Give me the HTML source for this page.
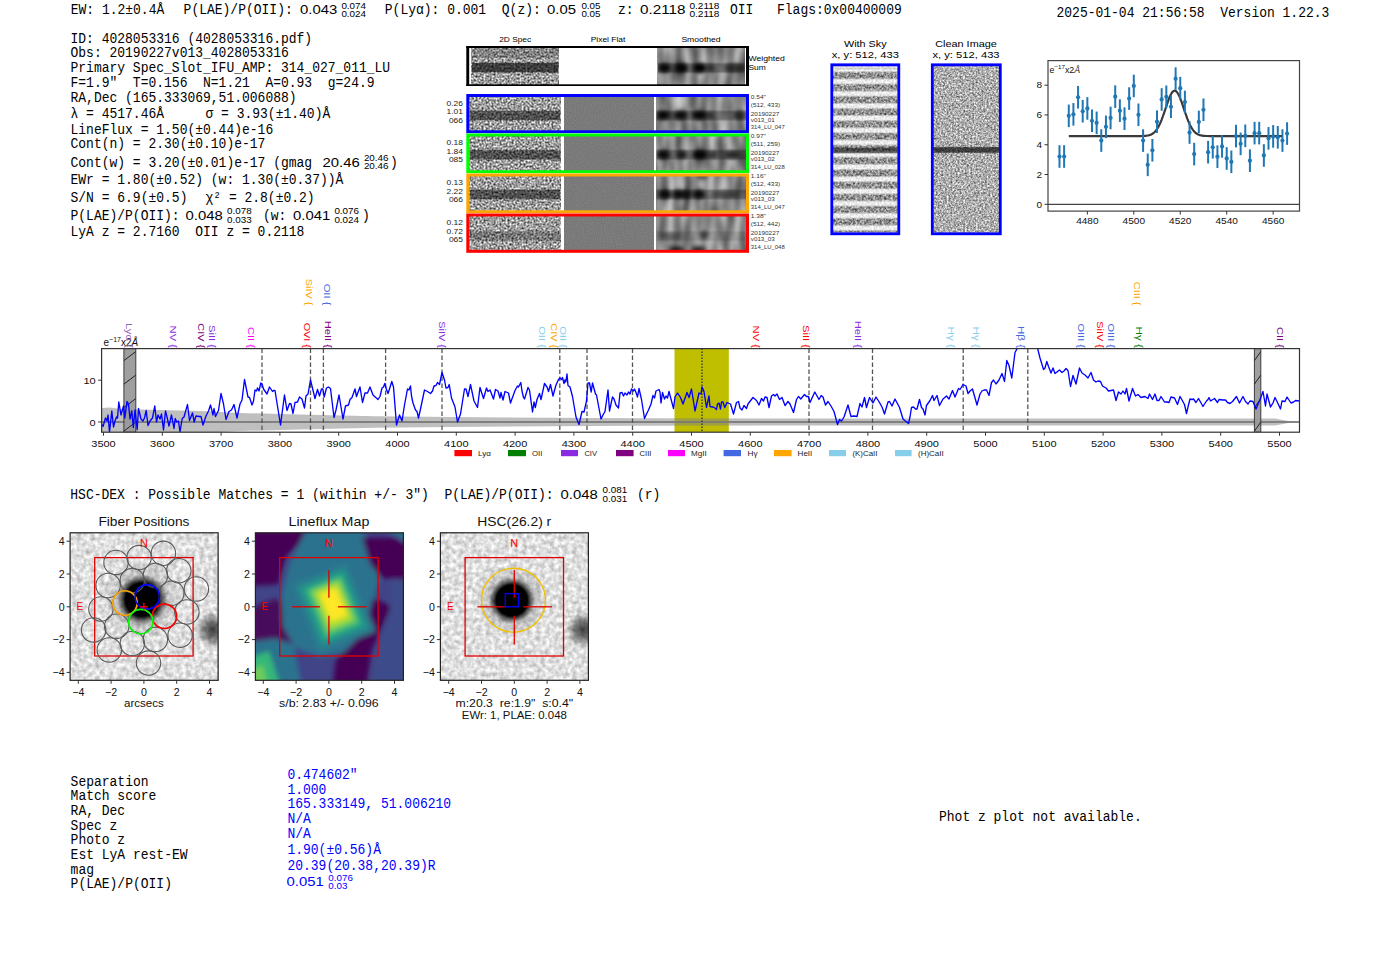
<!DOCTYPE html><html><head><meta charset="utf-8"><style>html,body{margin:0;padding:0;background:#fff;overflow:hidden}svg{display:block} text{white-space:pre}</style></head><body><svg width="1400" height="953" viewBox="0 0 1400 953" style="white-space:pre"><defs><filter id="blur2" x="-20%" y="-50%" width="140%" height="200%"><feGaussianBlur stdDeviation="2.2"/></filter><filter id="blur1" x="-20%" y="-50%" width="140%" height="200%"><feGaussianBlur stdDeviation="1.2"/></filter><filter id="nz1" x="471.90" y="47.80" width="86.60" height="36.60" filterUnits="userSpaceOnUse" color-interpolation-filters="sRGB"><feTurbulence type="fractalNoise" baseFrequency="0.5" numOctaves="2" seed="11"/><feColorMatrix type="matrix" values="1.35 0 0 0 -0.05500000000000005  1.35 0 0 0 -0.05500000000000005  1.35 0 0 0 -0.05500000000000005  0 0 0 0 1"/></filter><linearGradient id="g1" x1="0" y1="0" x2="0" y2="1"><stop offset="0.0055" stop-color="#000" stop-opacity="0.000"/><stop offset="0.0464" stop-color="#000" stop-opacity="0.180"/><stop offset="0.2650" stop-color="#000" stop-opacity="0.180"/><stop offset="0.3060" stop-color="#000" stop-opacity="0.000"/><stop offset="0.3934" stop-color="#000" stop-opacity="0.000"/><stop offset="0.4262" stop-color="#000" stop-opacity="0.620"/><stop offset="0.6557" stop-color="#000" stop-opacity="0.620"/><stop offset="0.6885" stop-color="#000" stop-opacity="0.000"/></linearGradient><filter id="nz2" x="657.90" y="47.80" width="86.70" height="36.30" filterUnits="userSpaceOnUse" color-interpolation-filters="sRGB"><feTurbulence type="fractalNoise" baseFrequency="0.12 0.035" numOctaves="1" seed="5"/><feColorMatrix type="matrix" values="0.8 0 0 0 0.14  0.8 0 0 0 0.14  0.8 0 0 0 0.14  0 0 0 0 1"/></filter><linearGradient id="g2" x1="0" y1="0" x2="0" y2="1"><stop offset="0.3884" stop-color="#000" stop-opacity="0.000"/><stop offset="0.4573" stop-color="#000" stop-opacity="0.320"/><stop offset="0.6501" stop-color="#000" stop-opacity="0.320"/><stop offset="0.7190" stop-color="#000" stop-opacity="0.000"/></linearGradient><clipPath id="cb0"><rect x="657.90" y="47.80" width="86.70" height="36.30"/></clipPath><filter id="nz3" x="469.80" y="95.50" width="90.40" height="36.30" filterUnits="userSpaceOnUse" color-interpolation-filters="sRGB"><feTurbulence type="fractalNoise" baseFrequency="0.5" numOctaves="2" seed="94"/><feColorMatrix type="matrix" values="1.35 0 0 0 -0.05500000000000005  1.35 0 0 0 -0.05500000000000005  1.35 0 0 0 -0.05500000000000005  0 0 0 0 1"/></filter><linearGradient id="g3" x1="0" y1="0" x2="0" y2="1"><stop offset="0.3994" stop-color="#000" stop-opacity="0.000"/><stop offset="0.4408" stop-color="#000" stop-opacity="0.500"/><stop offset="0.6612" stop-color="#000" stop-opacity="0.500"/><stop offset="0.7025" stop-color="#000" stop-opacity="0.000"/></linearGradient><filter id="nz4" x="564.00" y="95.50" width="89.50" height="36.30" filterUnits="userSpaceOnUse" color-interpolation-filters="sRGB"><feTurbulence type="fractalNoise" baseFrequency="0.9" numOctaves="1" seed="97"/><feColorMatrix type="matrix" values="0.12 0 0 0 0.42  0.12 0 0 0 0.42  0.12 0 0 0 0.42  0 0 0 0 1"/></filter><filter id="nz5" x="656.50" y="95.50" width="89.50" height="36.30" filterUnits="userSpaceOnUse" color-interpolation-filters="sRGB"><feTurbulence type="fractalNoise" baseFrequency="0.12 0.035" numOctaves="1" seed="101"/><feColorMatrix type="matrix" values="0.8 0 0 0 0.14  0.8 0 0 0 0.14  0.8 0 0 0 0.14  0 0 0 0 1"/></filter><linearGradient id="g4" x1="0" y1="0" x2="0" y2="1"><stop offset="0.3857" stop-color="#000" stop-opacity="0.000"/><stop offset="0.4545" stop-color="#000" stop-opacity="0.300"/><stop offset="0.6474" stop-color="#000" stop-opacity="0.300"/><stop offset="0.7163" stop-color="#000" stop-opacity="0.000"/></linearGradient><clipPath id="cb94"><rect x="656.50" y="95.50" width="89.50" height="36.30"/></clipPath><filter id="nz6" x="469.80" y="135.00" width="90.40" height="36.80" filterUnits="userSpaceOnUse" color-interpolation-filters="sRGB"><feTurbulence type="fractalNoise" baseFrequency="0.5" numOctaves="2" seed="133"/><feColorMatrix type="matrix" values="1.35 0 0 0 -0.05500000000000005  1.35 0 0 0 -0.05500000000000005  1.35 0 0 0 -0.05500000000000005  0 0 0 0 1"/></filter><linearGradient id="g5" x1="0" y1="0" x2="0" y2="1"><stop offset="0.3859" stop-color="#000" stop-opacity="0.000"/><stop offset="0.4266" stop-color="#000" stop-opacity="0.500"/><stop offset="0.6440" stop-color="#000" stop-opacity="0.500"/><stop offset="0.6848" stop-color="#000" stop-opacity="0.000"/></linearGradient><filter id="nz7" x="564.00" y="135.00" width="89.50" height="36.80" filterUnits="userSpaceOnUse" color-interpolation-filters="sRGB"><feTurbulence type="fractalNoise" baseFrequency="0.9" numOctaves="1" seed="136"/><feColorMatrix type="matrix" values="0.12 0 0 0 0.42  0.12 0 0 0 0.42  0.12 0 0 0 0.42  0 0 0 0 1"/></filter><filter id="nz8" x="656.50" y="135.00" width="89.50" height="36.80" filterUnits="userSpaceOnUse" color-interpolation-filters="sRGB"><feTurbulence type="fractalNoise" baseFrequency="0.12 0.035" numOctaves="1" seed="140"/><feColorMatrix type="matrix" values="0.8 0 0 0 0.14  0.8 0 0 0 0.14  0.8 0 0 0 0.14  0 0 0 0 1"/></filter><linearGradient id="g6" x1="0" y1="0" x2="0" y2="1"><stop offset="0.3723" stop-color="#000" stop-opacity="0.000"/><stop offset="0.4402" stop-color="#000" stop-opacity="0.300"/><stop offset="0.6304" stop-color="#000" stop-opacity="0.300"/><stop offset="0.6984" stop-color="#000" stop-opacity="0.000"/></linearGradient><clipPath id="cb133"><rect x="656.50" y="135.00" width="89.50" height="36.80"/></clipPath><filter id="nz9" x="469.80" y="175.00" width="90.40" height="36.80" filterUnits="userSpaceOnUse" color-interpolation-filters="sRGB"><feTurbulence type="fractalNoise" baseFrequency="0.5" numOctaves="2" seed="173"/><feColorMatrix type="matrix" values="1.35 0 0 0 -0.05500000000000005  1.35 0 0 0 -0.05500000000000005  1.35 0 0 0 -0.05500000000000005  0 0 0 0 1"/></filter><linearGradient id="g7" x1="0" y1="0" x2="0" y2="1"><stop offset="0.3777" stop-color="#000" stop-opacity="0.000"/><stop offset="0.4185" stop-color="#000" stop-opacity="0.500"/><stop offset="0.6359" stop-color="#000" stop-opacity="0.500"/><stop offset="0.6766" stop-color="#000" stop-opacity="0.000"/></linearGradient><filter id="nz10" x="564.00" y="175.00" width="89.50" height="36.80" filterUnits="userSpaceOnUse" color-interpolation-filters="sRGB"><feTurbulence type="fractalNoise" baseFrequency="0.9" numOctaves="1" seed="176"/><feColorMatrix type="matrix" values="0.12 0 0 0 0.42  0.12 0 0 0 0.42  0.12 0 0 0 0.42  0 0 0 0 1"/></filter><filter id="nz11" x="656.50" y="175.00" width="89.50" height="36.80" filterUnits="userSpaceOnUse" color-interpolation-filters="sRGB"><feTurbulence type="fractalNoise" baseFrequency="0.12 0.035" numOctaves="1" seed="180"/><feColorMatrix type="matrix" values="0.8 0 0 0 0.14  0.8 0 0 0 0.14  0.8 0 0 0 0.14  0 0 0 0 1"/></filter><linearGradient id="g8" x1="0" y1="0" x2="0" y2="1"><stop offset="0.3641" stop-color="#000" stop-opacity="0.000"/><stop offset="0.4321" stop-color="#000" stop-opacity="0.300"/><stop offset="0.6223" stop-color="#000" stop-opacity="0.300"/><stop offset="0.6902" stop-color="#000" stop-opacity="0.000"/></linearGradient><clipPath id="cb173"><rect x="656.50" y="175.00" width="89.50" height="36.80"/></clipPath><filter id="nz12" x="469.80" y="215.00" width="90.40" height="36.30" filterUnits="userSpaceOnUse" color-interpolation-filters="sRGB"><feTurbulence type="fractalNoise" baseFrequency="0.5" numOctaves="2" seed="213"/><feColorMatrix type="matrix" values="1.35 0 0 0 -0.05500000000000005  1.35 0 0 0 -0.05500000000000005  1.35 0 0 0 -0.05500000000000005  0 0 0 0 1"/></filter><linearGradient id="g9" x1="0" y1="0" x2="0" y2="1"><stop offset="0.4270" stop-color="#000" stop-opacity="0.000"/><stop offset="0.4683" stop-color="#000" stop-opacity="0.250"/><stop offset="0.6887" stop-color="#000" stop-opacity="0.250"/><stop offset="0.7300" stop-color="#000" stop-opacity="0.000"/></linearGradient><filter id="nz13" x="564.00" y="215.00" width="89.50" height="36.30" filterUnits="userSpaceOnUse" color-interpolation-filters="sRGB"><feTurbulence type="fractalNoise" baseFrequency="0.9" numOctaves="1" seed="216"/><feColorMatrix type="matrix" values="0.12 0 0 0 0.42  0.12 0 0 0 0.42  0.12 0 0 0 0.42  0 0 0 0 1"/></filter><filter id="nz14" x="656.50" y="215.00" width="89.50" height="36.30" filterUnits="userSpaceOnUse" color-interpolation-filters="sRGB"><feTurbulence type="fractalNoise" baseFrequency="0.12 0.035" numOctaves="1" seed="220"/><feColorMatrix type="matrix" values="0.8 0 0 0 0.14  0.8 0 0 0 0.14  0.8 0 0 0 0.14  0 0 0 0 1"/></filter><linearGradient id="g10" x1="0" y1="0" x2="0" y2="1"><stop offset="0.4132" stop-color="#000" stop-opacity="0.000"/><stop offset="0.4821" stop-color="#000" stop-opacity="0.120"/><stop offset="0.6749" stop-color="#000" stop-opacity="0.120"/><stop offset="0.7438" stop-color="#000" stop-opacity="0.000"/></linearGradient><clipPath id="cb213"><rect x="656.50" y="215.00" width="89.50" height="36.30"/></clipPath><filter id="nz15" x="833.00" y="66.20" width="64.70" height="166.30" filterUnits="userSpaceOnUse" color-interpolation-filters="sRGB"><feTurbulence type="fractalNoise" baseFrequency="0.5" numOctaves="1" seed="22"/><feColorMatrix type="matrix" values="0.35 0 0 0 0.7550000000000001  0.35 0 0 0 0.7550000000000001  0.35 0 0 0 0.7550000000000001  0 0 0 0 1"/></filter><clipPath id="skyclip"><rect x="833" y="66.2" width="64.70000000000005" height="166.3"/></clipPath><linearGradient id="g11" x1="0" y1="0" x2="0" y2="1"><stop offset="0.0048" stop-color="#fff" stop-opacity="0.350"/><stop offset="0.0096" stop-color="#fff" stop-opacity="0.000"/><stop offset="0.0144" stop-color="#fff" stop-opacity="0.350"/><stop offset="0.0235" stop-color="#fff" stop-opacity="0.000"/><stop offset="0.0277" stop-color="#fff" stop-opacity="0.000"/><stop offset="0.0409" stop-color="#fff" stop-opacity="1.000"/><stop offset="0.0698" stop-color="#fff" stop-opacity="1.000"/><stop offset="0.0830" stop-color="#fff" stop-opacity="0.000"/><stop offset="0.1010" stop-color="#fff" stop-opacity="0.000"/><stop offset="0.1143" stop-color="#fff" stop-opacity="1.000"/><stop offset="0.1431" stop-color="#fff" stop-opacity="1.000"/><stop offset="0.1563" stop-color="#fff" stop-opacity="0.000"/><stop offset="0.1744" stop-color="#fff" stop-opacity="0.000"/><stop offset="0.1876" stop-color="#fff" stop-opacity="1.000"/><stop offset="0.2165" stop-color="#fff" stop-opacity="1.000"/><stop offset="0.2297" stop-color="#fff" stop-opacity="0.000"/><stop offset="0.2477" stop-color="#fff" stop-opacity="0.000"/><stop offset="0.2610" stop-color="#fff" stop-opacity="1.000"/><stop offset="0.2898" stop-color="#fff" stop-opacity="1.000"/><stop offset="0.3031" stop-color="#fff" stop-opacity="0.000"/><stop offset="0.3211" stop-color="#fff" stop-opacity="0.000"/><stop offset="0.3343" stop-color="#fff" stop-opacity="1.000"/><stop offset="0.3632" stop-color="#fff" stop-opacity="1.000"/><stop offset="0.3764" stop-color="#fff" stop-opacity="0.000"/><stop offset="0.3945" stop-color="#fff" stop-opacity="0.000"/><stop offset="0.4077" stop-color="#fff" stop-opacity="1.000"/><stop offset="0.4366" stop-color="#fff" stop-opacity="1.000"/><stop offset="0.4498" stop-color="#fff" stop-opacity="0.000"/><stop offset="0.4678" stop-color="#fff" stop-opacity="0.000"/><stop offset="0.4811" stop-color="#fff" stop-opacity="1.000"/><stop offset="0.5099" stop-color="#fff" stop-opacity="1.000"/><stop offset="0.5232" stop-color="#fff" stop-opacity="0.000"/><stop offset="0.5412" stop-color="#fff" stop-opacity="0.000"/><stop offset="0.5544" stop-color="#fff" stop-opacity="1.000"/><stop offset="0.5833" stop-color="#fff" stop-opacity="1.000"/><stop offset="0.5965" stop-color="#fff" stop-opacity="0.000"/><stop offset="0.6146" stop-color="#fff" stop-opacity="0.000"/><stop offset="0.6278" stop-color="#fff" stop-opacity="1.000"/><stop offset="0.6566" stop-color="#fff" stop-opacity="1.000"/><stop offset="0.6699" stop-color="#fff" stop-opacity="0.000"/><stop offset="0.6879" stop-color="#fff" stop-opacity="0.000"/><stop offset="0.7011" stop-color="#fff" stop-opacity="1.000"/><stop offset="0.7300" stop-color="#fff" stop-opacity="1.000"/><stop offset="0.7432" stop-color="#fff" stop-opacity="0.000"/><stop offset="0.7613" stop-color="#fff" stop-opacity="0.000"/><stop offset="0.7745" stop-color="#fff" stop-opacity="1.000"/><stop offset="0.8034" stop-color="#fff" stop-opacity="1.000"/><stop offset="0.8166" stop-color="#fff" stop-opacity="0.000"/><stop offset="0.8346" stop-color="#fff" stop-opacity="0.000"/><stop offset="0.8479" stop-color="#fff" stop-opacity="1.000"/><stop offset="0.8767" stop-color="#fff" stop-opacity="1.000"/><stop offset="0.8900" stop-color="#fff" stop-opacity="0.000"/><stop offset="0.9080" stop-color="#fff" stop-opacity="0.000"/><stop offset="0.9212" stop-color="#fff" stop-opacity="1.000"/><stop offset="0.9501" stop-color="#fff" stop-opacity="1.000"/><stop offset="0.9633" stop-color="#fff" stop-opacity="0.000"/><stop offset="0.9814" stop-color="#fff" stop-opacity="0.000"/><stop offset="0.9946" stop-color="#fff" stop-opacity="1.000"/></linearGradient><mask id="skymask" maskUnits="userSpaceOnUse" x="833" y="66.2" width="64.70000000000005" height="166.3"><rect x="833" y="66.2" width="64.70000000000005" height="166.3" fill="url(#g11)"/></mask><filter id="nz16" x="833.00" y="66.20" width="64.70" height="166.30" filterUnits="userSpaceOnUse" color-interpolation-filters="sRGB"><feTurbulence type="fractalNoise" baseFrequency="0.45" numOctaves="2" seed="21"/><feColorMatrix type="matrix" values="1.0 0 0 0 0.06000000000000005  1.0 0 0 0 0.06000000000000005  1.0 0 0 0 0.06000000000000005  0 0 0 0 1"/></filter><linearGradient id="g12" x1="0" y1="0" x2="0" y2="1"><stop offset="0.4853" stop-color="#000" stop-opacity="0.000"/><stop offset="0.4925" stop-color="#000" stop-opacity="0.500"/><stop offset="0.5201" stop-color="#000" stop-opacity="0.500"/><stop offset="0.5274" stop-color="#000" stop-opacity="0.000"/></linearGradient><filter id="nz17" x="933.50" y="66.20" width="65.70" height="166.30" filterUnits="userSpaceOnUse" color-interpolation-filters="sRGB"><feTurbulence type="fractalNoise" baseFrequency="0.55" numOctaves="2" seed="31"/><feColorMatrix type="matrix" values="1.05 0 0 0 0.15500000000000003  1.05 0 0 0 0.15500000000000003  1.05 0 0 0 0.15500000000000003  0 0 0 0 1"/></filter><linearGradient id="g13" x1="0" y1="0" x2="0" y2="1"><stop offset="0.4823" stop-color="#000" stop-opacity="0.000"/><stop offset="0.4901" stop-color="#000" stop-opacity="0.650"/><stop offset="0.5165" stop-color="#000" stop-opacity="0.650"/><stop offset="0.5244" stop-color="#000" stop-opacity="0.000"/></linearGradient><clipPath id="specclip"><rect x="101.6" y="348.6" width="1197.9" height="83.59999999999997"/></clipPath><clipPath id="gc41"><rect x="70.1" y="532.8" width="148.0" height="147.5"/></clipPath><filter id="nz18" x="70.10" y="532.80" width="148.00" height="147.50" filterUnits="userSpaceOnUse" color-interpolation-filters="sRGB"><feTurbulence type="fractalNoise" baseFrequency="0.22" numOctaves="2" seed="41"/><feColorMatrix type="matrix" values="0.45 0 0 0 0.65  0.45 0 0 0 0.65  0.45 0 0 0 0.65  0 0 0 0 1"/></filter><radialGradient id="rg41"><stop offset="0" stop-color="#000" stop-opacity="1"/><stop offset="0.412" stop-color="#000" stop-opacity="1"/><stop offset="0.508" stop-color="#000" stop-opacity="0.6"/><stop offset="0.625" stop-color="#000" stop-opacity="0.15"/><stop offset="1" stop-color="#000" stop-opacity="0"/></radialGradient><radialGradient id="rg41b"><stop offset="0" stop-color="#000" stop-opacity="0.72"/><stop offset="0.45" stop-color="#000" stop-opacity="0.5"/><stop offset="1" stop-color="#000" stop-opacity="0"/></radialGradient><clipPath id="lfclip"><rect x="255.4" y="532.8" width="147.99999999999997" height="147.5"/></clipPath><filter id="lfblur" x="-10%" y="-10%" width="120%" height="120%"><feGaussianBlur stdDeviation="2.6"/></filter><clipPath id="gc43"><rect x="440.4" y="532.8" width="148.0" height="147.5"/></clipPath><filter id="nz19" x="440.40" y="532.80" width="148.00" height="147.50" filterUnits="userSpaceOnUse" color-interpolation-filters="sRGB"><feTurbulence type="fractalNoise" baseFrequency="0.22" numOctaves="2" seed="43"/><feColorMatrix type="matrix" values="0.45 0 0 0 0.65  0.45 0 0 0 0.65  0.45 0 0 0 0.65  0 0 0 0 1"/></filter><radialGradient id="rg43"><stop offset="0" stop-color="#000" stop-opacity="1"/><stop offset="0.421" stop-color="#000" stop-opacity="1"/><stop offset="0.513" stop-color="#000" stop-opacity="0.6"/><stop offset="0.625" stop-color="#000" stop-opacity="0.15"/><stop offset="1" stop-color="#000" stop-opacity="0"/></radialGradient><radialGradient id="rg43b"><stop offset="0" stop-color="#000" stop-opacity="0.72"/><stop offset="0.45" stop-color="#000" stop-opacity="0.5"/><stop offset="1" stop-color="#000" stop-opacity="0"/></radialGradient></defs><rect x="0" y="0" width="1400" height="953" fill="#fff"/><text xml:space="preserve" x="0" y="0" transform="translate(70.70,14.30) scale(1,1.07)" font-family="Liberation Mono, monospace" font-size="13" fill="#000" >EW: 1.2±0.4Å</text>
<text xml:space="preserve" x="0" y="0" transform="translate(183.60,14.30) scale(1,1.07)" font-family="Liberation Mono, monospace" font-size="13" fill="#000" >P(LAE)/P(OII):</text>
<text xml:space="preserve" x="0" y="0" transform="translate(300.00,14.30)" font-family="Liberation Sans, sans-serif" font-size="13" fill="#000" text-anchor="start" textLength="37.19" lengthAdjust="spacingAndGlyphs" >0.043</text>
<text xml:space="preserve" x="0" y="0" transform="translate(341.40,8.60)" font-family="Liberation Sans, sans-serif" font-size="8.6" fill="#000" text-anchor="start" textLength="24.61" lengthAdjust="spacingAndGlyphs" >0.074</text>
<text xml:space="preserve" x="0" y="0" transform="translate(341.40,17.20)" font-family="Liberation Sans, sans-serif" font-size="8.6" fill="#000" text-anchor="start" textLength="24.61" lengthAdjust="spacingAndGlyphs" >0.024</text>
<text xml:space="preserve" x="0" y="0" transform="translate(384.80,14.30) scale(1,1.07)" font-family="Liberation Mono, monospace" font-size="13" fill="#000" >P(Lyα): 0.001</text>
<text xml:space="preserve" x="0" y="0" transform="translate(501.80,14.30) scale(1,1.07)" font-family="Liberation Mono, monospace" font-size="13" fill="#000" >Q(z):</text>
<text xml:space="preserve" x="0" y="0" transform="translate(547.10,14.30)" font-family="Liberation Sans, sans-serif" font-size="13" fill="#000" text-anchor="start" textLength="28.92" lengthAdjust="spacingAndGlyphs" >0.05</text>
<text xml:space="preserve" x="0" y="0" transform="translate(581.40,8.60)" font-family="Liberation Sans, sans-serif" font-size="8.6" fill="#000" text-anchor="start" textLength="19.14" lengthAdjust="spacingAndGlyphs" >0.05</text>
<text xml:space="preserve" x="0" y="0" transform="translate(581.40,17.20)" font-family="Liberation Sans, sans-serif" font-size="8.6" fill="#000" text-anchor="start" textLength="19.14" lengthAdjust="spacingAndGlyphs" >0.05</text>
<text xml:space="preserve" x="0" y="0" transform="translate(618.00,14.30) scale(1,1.07)" font-family="Liberation Mono, monospace" font-size="13" fill="#000" >z:</text>
<text xml:space="preserve" x="0" y="0" transform="translate(640.10,14.30)" font-family="Liberation Sans, sans-serif" font-size="13" fill="#000" text-anchor="start" textLength="45.45" lengthAdjust="spacingAndGlyphs" >0.2118</text>
<text xml:space="preserve" x="0" y="0" transform="translate(689.40,8.60)" font-family="Liberation Sans, sans-serif" font-size="8.6" fill="#000" text-anchor="start" textLength="30.08" lengthAdjust="spacingAndGlyphs" >0.2118</text>
<text xml:space="preserve" x="0" y="0" transform="translate(689.40,17.20)" font-family="Liberation Sans, sans-serif" font-size="8.6" fill="#000" text-anchor="start" textLength="30.08" lengthAdjust="spacingAndGlyphs" >0.2118</text>
<text xml:space="preserve" x="0" y="0" transform="translate(730.00,14.30) scale(1,1.07)" font-family="Liberation Mono, monospace" font-size="13" fill="#000" >OII</text>
<text xml:space="preserve" x="0" y="0" transform="translate(777.00,14.30) scale(1,1.07)" font-family="Liberation Mono, monospace" font-size="13" fill="#000" >Flags:0x00400009</text>
<text xml:space="preserve" x="0" y="0" transform="translate(1056.50,16.70) scale(1,1.07)" font-family="Liberation Mono, monospace" font-size="13" fill="#000" >2025-01-04 21:56:58  Version 1.22.3</text>
<text xml:space="preserve" x="0" y="0" transform="translate(70.50,42.60) scale(1,1.07)" font-family="Liberation Mono, monospace" font-size="13" fill="#000" >ID: 4028053316 (4028053316.pdf)</text>
<text xml:space="preserve" x="0" y="0" transform="translate(70.50,56.80) scale(1,1.07)" font-family="Liberation Mono, monospace" font-size="13" fill="#000" >Obs: 20190227v013_4028053316</text>
<text xml:space="preserve" x="0" y="0" transform="translate(70.50,71.80) scale(1,1.07)" font-family="Liberation Mono, monospace" font-size="13" fill="#000" >Primary Spec_Slot_IFU_AMP: 314_027_011_LU</text>
<text xml:space="preserve" x="0" y="0" transform="translate(70.50,86.80) scale(1,1.07)" font-family="Liberation Mono, monospace" font-size="13" fill="#000" >F=1.9&quot;  T=0.156  N=1.21  A=0.93  g=24.9</text>
<text xml:space="preserve" x="0" y="0" transform="translate(70.50,101.80) scale(1,1.07)" font-family="Liberation Mono, monospace" font-size="13" fill="#000" >RA,Dec (165.333069,51.006088)</text>
<text xml:space="preserve" x="0" y="0" transform="translate(70.50,118.00) scale(1,1.07)" font-family="Liberation Mono, monospace" font-size="13" fill="#000" >λ = 4517.46Å</text>
<text xml:space="preserve" x="0" y="0" transform="translate(205.50,118.00) scale(1,1.07)" font-family="Liberation Mono, monospace" font-size="13" fill="#000" >σ = 3.93(±1.40)Å</text>
<text xml:space="preserve" x="0" y="0" transform="translate(70.50,133.50) scale(1,1.07)" font-family="Liberation Mono, monospace" font-size="13" fill="#000" >LineFlux = 1.50(±0.44)e-16</text>
<text xml:space="preserve" x="0" y="0" transform="translate(70.50,148.20) scale(1,1.07)" font-family="Liberation Mono, monospace" font-size="13" fill="#000" >Cont(n) = 2.30(±0.10)e-17</text>
<text xml:space="preserve" x="0" y="0" transform="translate(70.50,166.60) scale(1,1.07)" font-family="Liberation Mono, monospace" font-size="13" fill="#000" >Cont(w) = 3.20(±0.01)e-17 (gmag</text>
<text xml:space="preserve" x="0" y="0" transform="translate(322.50,166.50)" font-family="Liberation Sans, sans-serif" font-size="13" fill="#000" text-anchor="start" textLength="37.19" lengthAdjust="spacingAndGlyphs" >20.46</text>
<text xml:space="preserve" x="0" y="0" transform="translate(363.90,160.80)" font-family="Liberation Sans, sans-serif" font-size="8.6" fill="#000" text-anchor="start" textLength="24.61" lengthAdjust="spacingAndGlyphs" >20.46</text>
<text xml:space="preserve" x="0" y="0" transform="translate(363.90,169.40)" font-family="Liberation Sans, sans-serif" font-size="8.6" fill="#000" text-anchor="start" textLength="24.61" lengthAdjust="spacingAndGlyphs" >20.46</text>
<text xml:space="preserve" x="0" y="0" transform="translate(390.00,166.60) scale(1,1.07)" font-family="Liberation Mono, monospace" font-size="13" fill="#000" >)</text>
<text xml:space="preserve" x="0" y="0" transform="translate(70.50,184.30) scale(1,1.07)" font-family="Liberation Mono, monospace" font-size="13" fill="#000" >EWr = 1.80(±0.52) (w: 1.30(±0.37))Å</text>
<text xml:space="preserve" x="0" y="0" transform="translate(70.50,202.00) scale(1,1.07)" font-family="Liberation Mono, monospace" font-size="13" fill="#000" >S/N = 6.9(±0.5)</text>
<text xml:space="preserve" x="0" y="0" transform="translate(205.50,202.00) scale(1,1.07)" font-family="Liberation Mono, monospace" font-size="13" fill="#000" >χ² = 2.8(±0.2)</text>
<text xml:space="preserve" x="0" y="0" transform="translate(70.50,220.10) scale(1,1.07)" font-family="Liberation Mono, monospace" font-size="13" fill="#000" >P(LAE)/P(OII):</text>
<text xml:space="preserve" x="0" y="0" transform="translate(185.50,219.80)" font-family="Liberation Sans, sans-serif" font-size="13" fill="#000" text-anchor="start" textLength="37.19" lengthAdjust="spacingAndGlyphs" >0.048</text>
<text xml:space="preserve" x="0" y="0" transform="translate(227.00,214.10)" font-family="Liberation Sans, sans-serif" font-size="8.6" fill="#000" text-anchor="start" textLength="24.61" lengthAdjust="spacingAndGlyphs" >0.078</text>
<text xml:space="preserve" x="0" y="0" transform="translate(227.00,222.70)" font-family="Liberation Sans, sans-serif" font-size="8.6" fill="#000" text-anchor="start" textLength="24.61" lengthAdjust="spacingAndGlyphs" >0.033</text>
<text xml:space="preserve" x="0" y="0" transform="translate(263.00,220.10) scale(1,1.07)" font-family="Liberation Mono, monospace" font-size="13" fill="#000" >(w:</text>
<text xml:space="preserve" x="0" y="0" transform="translate(293.00,219.80)" font-family="Liberation Sans, sans-serif" font-size="13" fill="#000" text-anchor="start" textLength="37.19" lengthAdjust="spacingAndGlyphs" >0.041</text>
<text xml:space="preserve" x="0" y="0" transform="translate(334.40,214.10)" font-family="Liberation Sans, sans-serif" font-size="8.6" fill="#000" text-anchor="start" textLength="24.61" lengthAdjust="spacingAndGlyphs" >0.076</text>
<text xml:space="preserve" x="0" y="0" transform="translate(334.40,222.70)" font-family="Liberation Sans, sans-serif" font-size="8.6" fill="#000" text-anchor="start" textLength="24.61" lengthAdjust="spacingAndGlyphs" >0.024</text>
<text xml:space="preserve" x="0" y="0" transform="translate(362.00,220.10) scale(1,1.07)" font-family="Liberation Mono, monospace" font-size="13" fill="#000" >)</text>
<text xml:space="preserve" x="0" y="0" transform="translate(70.50,236.10) scale(1,1.07)" font-family="Liberation Mono, monospace" font-size="13" fill="#000" >LyA z = 2.7160  OII z = 0.2118</text>
<text xml:space="preserve" x="0" y="0" transform="translate(515.20,41.80)" font-family="Liberation Sans, sans-serif" font-size="7.7" fill="#000" text-anchor="middle" textLength="31.97" lengthAdjust="spacingAndGlyphs" >2D Spec</text>
<text xml:space="preserve" x="0" y="0" transform="translate(608.00,41.80)" font-family="Liberation Sans, sans-serif" font-size="7.7" fill="#000" text-anchor="middle" textLength="34.52" lengthAdjust="spacingAndGlyphs" >Pixel Flat</text>
<text xml:space="preserve" x="0" y="0" transform="translate(701.00,41.80)" font-family="Liberation Sans, sans-serif" font-size="7.7" fill="#000" text-anchor="middle" textLength="39.27" lengthAdjust="spacingAndGlyphs" >Smoothed</text>
<rect x="466.30" y="46.00" width="282.70" height="40.00" fill="#fff" />
<rect x="471.90" y="47.80" width="86.60" height="36.60" fill="#888" filter="url(#nz1)" opacity="1.0" />
<rect x="471.90" y="47.80" width="86.60" height="36.60" fill="url(#g1)"/>
<rect x="657.90" y="47.80" width="86.70" height="36.30" fill="#888" filter="url(#nz2)" opacity="1.0" />
<rect x="657.90" y="47.80" width="86.70" height="36.30" fill="url(#g2)"/>
<g clip-path="url(#cb0)"><g filter="url(#blur2)"><ellipse cx="664.3" cy="67.9" rx="6.5" ry="4.6" fill="#000" opacity="0.95"/><ellipse cx="681.5" cy="67.9" rx="6.8" ry="4.6" fill="#000" opacity="0.95"/><ellipse cx="699.7" cy="67.9" rx="6.8" ry="5.0" fill="#000" opacity="1"/><ellipse cx="711.0" cy="67.9" rx="3.3" ry="3.8" fill="#000" opacity="0.6"/><ellipse cx="734.0" cy="67.9" rx="10.3" ry="4.3" fill="#000" opacity="0.55"/></g></g>
<rect x="466.30" y="46.00" width="2.90" height="40.00" fill="#000" />
<rect x="746.00" y="46.00" width="3.00" height="40.00" fill="#000" />
<rect x="466.30" y="46.00" width="282.70" height="2.00" fill="#000" />
<rect x="466.30" y="84.30" width="282.70" height="1.70" fill="#000" />
<text xml:space="preserve" x="0" y="0" transform="translate(748.50,61.20)" font-family="Liberation Sans, sans-serif" font-size="7.7" fill="#000" text-anchor="start" textLength="36.39" lengthAdjust="spacingAndGlyphs" >Weighted</text>
<text xml:space="preserve" x="0" y="0" transform="translate(748.50,69.80)" font-family="Liberation Sans, sans-serif" font-size="7.7" fill="#000" text-anchor="start" textLength="17.23" lengthAdjust="spacingAndGlyphs" >Sum</text>
<rect x="466.30" y="94.00" width="282.70" height="39.30" fill="#fff" />
<rect x="469.80" y="95.50" width="90.40" height="36.30" fill="#888" filter="url(#nz3)" opacity="1.0" />
<rect x="469.80" y="95.50" width="90.40" height="36.30" fill="url(#g3)"/>
<rect x="564.00" y="95.50" width="89.50" height="36.30" fill="#7b7b7b" />
<rect x="564.00" y="95.50" width="89.50" height="36.30" fill="#888" filter="url(#nz4)" opacity="1.0" />
<rect x="656.50" y="95.50" width="89.50" height="36.30" fill="#888" filter="url(#nz5)" opacity="1.0" />
<rect x="656.50" y="95.50" width="89.50" height="36.30" fill="url(#g4)"/>
<g clip-path="url(#cb94)"><g filter="url(#blur2)"><ellipse cx="663.4" cy="115.2" rx="6.8" ry="4.8" fill="#000" opacity="0.95"/><ellipse cx="680.6" cy="115.2" rx="6.8" ry="4.8" fill="#000" opacity="0.9"/><ellipse cx="699.2" cy="115.2" rx="7.3" ry="4.8" fill="#000" opacity="0.95"/><ellipse cx="710.2" cy="115.2" rx="3.3" ry="3.8" fill="#000" opacity="0.6"/><ellipse cx="739.8" cy="115.2" rx="6.3" ry="4.8" fill="#000" opacity="0.6"/></g></g>
<rect x="467.80" y="95.50" width="279.70" height="36.30" fill="none" stroke="#0000ff" stroke-width="3" />
<text xml:space="preserve" x="0" y="0" transform="translate(463.00,105.60)" font-family="Liberation Sans, sans-serif" font-size="7.4" fill="#222" text-anchor="end" textLength="16.45" lengthAdjust="spacingAndGlyphs" >0.26</text>
<text xml:space="preserve" x="0" y="0" transform="translate(463.00,114.20)" font-family="Liberation Sans, sans-serif" font-size="7.4" fill="#222" text-anchor="end" textLength="16.45" lengthAdjust="spacingAndGlyphs" >1.01</text>
<text xml:space="preserve" x="0" y="0" transform="translate(463.00,122.80)" font-family="Liberation Sans, sans-serif" font-size="7.4" fill="#222" text-anchor="end" textLength="14.11" lengthAdjust="spacingAndGlyphs" >066</text>
<text xml:space="preserve" x="0" y="0" transform="translate(750.80,98.80)" font-family="Liberation Sans, sans-serif" font-size="5.6" fill="#333" text-anchor="start" textLength="15.05" lengthAdjust="spacingAndGlyphs" >0.54&quot;</text>
<text xml:space="preserve" x="0" y="0" transform="translate(750.80,106.90)" font-family="Liberation Sans, sans-serif" font-size="5.6" fill="#333" text-anchor="start" textLength="29.31" lengthAdjust="spacingAndGlyphs" >(512, 433)</text>
<text xml:space="preserve" x="0" y="0" transform="translate(750.80,115.50)" font-family="Liberation Sans, sans-serif" font-size="5.6" fill="#333" text-anchor="start" textLength="28.50" lengthAdjust="spacingAndGlyphs" >20190227</text>
<text xml:space="preserve" x="0" y="0" transform="translate(750.80,121.50)" font-family="Liberation Sans, sans-serif" font-size="5.6" fill="#333" text-anchor="start" textLength="23.92" lengthAdjust="spacingAndGlyphs" >v013_01</text>
<text xml:space="preserve" x="0" y="0" transform="translate(750.80,129.00)" font-family="Liberation Sans, sans-serif" font-size="5.6" fill="#333" text-anchor="start" textLength="33.89" lengthAdjust="spacingAndGlyphs" >314_LU_047</text>
<rect x="466.30" y="133.50" width="282.70" height="39.80" fill="#fff" />
<rect x="469.80" y="135.00" width="90.40" height="36.80" fill="#888" filter="url(#nz6)" opacity="1.0" />
<rect x="469.80" y="135.00" width="90.40" height="36.80" fill="url(#g5)"/>
<rect x="564.00" y="135.00" width="89.50" height="36.80" fill="#7b7b7b" />
<rect x="564.00" y="135.00" width="89.50" height="36.80" fill="#888" filter="url(#nz7)" opacity="1.0" />
<rect x="656.50" y="135.00" width="89.50" height="36.80" fill="#888" filter="url(#nz8)" opacity="1.0" />
<rect x="656.50" y="135.00" width="89.50" height="36.80" fill="url(#g6)"/>
<g clip-path="url(#cb133)"><g filter="url(#blur2)"><ellipse cx="663.0" cy="154.7" rx="6.3" ry="4.8" fill="#000" opacity="0.9"/><ellipse cx="682.0" cy="154.7" rx="5.3" ry="4.3" fill="#000" opacity="0.8"/><ellipse cx="700.0" cy="154.7" rx="7.3" ry="4.8" fill="#000" opacity="0.95"/><ellipse cx="713.0" cy="154.7" rx="4.3" ry="3.8" fill="#000" opacity="0.6"/><ellipse cx="732.0" cy="154.7" rx="7.3" ry="4.3" fill="#000" opacity="0.7"/></g></g>
<rect x="467.80" y="135.00" width="279.70" height="36.80" fill="none" stroke="#00ff00" stroke-width="3" />
<text xml:space="preserve" x="0" y="0" transform="translate(463.00,145.10)" font-family="Liberation Sans, sans-serif" font-size="7.4" fill="#222" text-anchor="end" textLength="16.45" lengthAdjust="spacingAndGlyphs" >0.18</text>
<text xml:space="preserve" x="0" y="0" transform="translate(463.00,153.70)" font-family="Liberation Sans, sans-serif" font-size="7.4" fill="#222" text-anchor="end" textLength="16.45" lengthAdjust="spacingAndGlyphs" >1.84</text>
<text xml:space="preserve" x="0" y="0" transform="translate(463.00,162.30)" font-family="Liberation Sans, sans-serif" font-size="7.4" fill="#222" text-anchor="end" textLength="14.11" lengthAdjust="spacingAndGlyphs" >085</text>
<text xml:space="preserve" x="0" y="0" transform="translate(750.80,138.30)" font-family="Liberation Sans, sans-serif" font-size="5.6" fill="#333" text-anchor="start" textLength="15.05" lengthAdjust="spacingAndGlyphs" >0.97&quot;</text>
<text xml:space="preserve" x="0" y="0" transform="translate(750.80,146.40)" font-family="Liberation Sans, sans-serif" font-size="5.6" fill="#333" text-anchor="start" textLength="29.31" lengthAdjust="spacingAndGlyphs" >(511, 259)</text>
<text xml:space="preserve" x="0" y="0" transform="translate(750.80,155.00)" font-family="Liberation Sans, sans-serif" font-size="5.6" fill="#333" text-anchor="start" textLength="28.50" lengthAdjust="spacingAndGlyphs" >20190227</text>
<text xml:space="preserve" x="0" y="0" transform="translate(750.80,161.00)" font-family="Liberation Sans, sans-serif" font-size="5.6" fill="#333" text-anchor="start" textLength="23.92" lengthAdjust="spacingAndGlyphs" >v013_02</text>
<text xml:space="preserve" x="0" y="0" transform="translate(750.80,168.50)" font-family="Liberation Sans, sans-serif" font-size="5.6" fill="#333" text-anchor="start" textLength="33.89" lengthAdjust="spacingAndGlyphs" >314_LU_028</text>
<rect x="466.30" y="173.50" width="282.70" height="39.80" fill="#fff" />
<rect x="469.80" y="175.00" width="90.40" height="36.80" fill="#888" filter="url(#nz9)" opacity="1.0" />
<rect x="469.80" y="175.00" width="90.40" height="36.80" fill="url(#g7)"/>
<rect x="564.00" y="175.00" width="89.50" height="36.80" fill="#7b7b7b" />
<rect x="564.00" y="175.00" width="89.50" height="36.80" fill="#888" filter="url(#nz10)" opacity="1.0" />
<rect x="656.50" y="175.00" width="89.50" height="36.80" fill="#888" filter="url(#nz11)" opacity="1.0" />
<rect x="656.50" y="175.00" width="89.50" height="36.80" fill="url(#g8)"/>
<g clip-path="url(#cb173)"><g filter="url(#blur2)"><ellipse cx="665.0" cy="194.4" rx="6.3" ry="4.8" fill="#000" opacity="0.9"/><ellipse cx="678.0" cy="194.4" rx="5.3" ry="4.8" fill="#000" opacity="0.9"/><ellipse cx="686.0" cy="194.4" rx="5.3" ry="4.8" fill="#000" opacity="0.8"/><ellipse cx="699.0" cy="194.4" rx="6.3" ry="4.8" fill="#000" opacity="0.9"/><ellipse cx="725.0" cy="194.4" rx="13.3" ry="3.8" fill="#000" opacity="0.4"/><ellipse cx="702.0" cy="176.0" rx="5.3" ry="3.8" fill="#000" opacity="0.5"/></g></g>
<rect x="467.80" y="175.00" width="279.70" height="36.80" fill="none" stroke="#ffa500" stroke-width="3" />
<text xml:space="preserve" x="0" y="0" transform="translate(463.00,185.10)" font-family="Liberation Sans, sans-serif" font-size="7.4" fill="#222" text-anchor="end" textLength="16.45" lengthAdjust="spacingAndGlyphs" >0.13</text>
<text xml:space="preserve" x="0" y="0" transform="translate(463.00,193.70)" font-family="Liberation Sans, sans-serif" font-size="7.4" fill="#222" text-anchor="end" textLength="16.45" lengthAdjust="spacingAndGlyphs" >2.22</text>
<text xml:space="preserve" x="0" y="0" transform="translate(463.00,202.30)" font-family="Liberation Sans, sans-serif" font-size="7.4" fill="#222" text-anchor="end" textLength="14.11" lengthAdjust="spacingAndGlyphs" >066</text>
<text xml:space="preserve" x="0" y="0" transform="translate(750.80,178.30)" font-family="Liberation Sans, sans-serif" font-size="5.6" fill="#333" text-anchor="start" textLength="15.05" lengthAdjust="spacingAndGlyphs" >1.16&quot;</text>
<text xml:space="preserve" x="0" y="0" transform="translate(750.80,186.40)" font-family="Liberation Sans, sans-serif" font-size="5.6" fill="#333" text-anchor="start" textLength="29.31" lengthAdjust="spacingAndGlyphs" >(512, 433)</text>
<text xml:space="preserve" x="0" y="0" transform="translate(750.80,195.00)" font-family="Liberation Sans, sans-serif" font-size="5.6" fill="#333" text-anchor="start" textLength="28.50" lengthAdjust="spacingAndGlyphs" >20190227</text>
<text xml:space="preserve" x="0" y="0" transform="translate(750.80,201.00)" font-family="Liberation Sans, sans-serif" font-size="5.6" fill="#333" text-anchor="start" textLength="23.92" lengthAdjust="spacingAndGlyphs" >v013_03</text>
<text xml:space="preserve" x="0" y="0" transform="translate(750.80,208.50)" font-family="Liberation Sans, sans-serif" font-size="5.6" fill="#333" text-anchor="start" textLength="33.89" lengthAdjust="spacingAndGlyphs" >314_LU_047</text>
<rect x="466.30" y="213.50" width="282.70" height="39.30" fill="#fff" />
<rect x="469.80" y="215.00" width="90.40" height="36.30" fill="#888" filter="url(#nz12)" opacity="1.0" />
<rect x="469.80" y="215.00" width="90.40" height="36.30" fill="url(#g9)"/>
<rect x="564.00" y="215.00" width="89.50" height="36.30" fill="#7b7b7b" />
<rect x="564.00" y="215.00" width="89.50" height="36.30" fill="#888" filter="url(#nz13)" opacity="1.0" />
<rect x="656.50" y="215.00" width="89.50" height="36.30" fill="#888" filter="url(#nz14)" opacity="1.0" />
<rect x="656.50" y="215.00" width="89.50" height="36.30" fill="url(#g10)"/>
<g clip-path="url(#cb213)"><g filter="url(#blur2)"><ellipse cx="677.0" cy="250.0" rx="7.3" ry="3.8" fill="#000" opacity="0.8"/><ellipse cx="698.0" cy="250.0" rx="6.3" ry="3.8" fill="#000" opacity="0.8"/><ellipse cx="704.0" cy="235.0" rx="4.3" ry="4.8" fill="#000" opacity="0.6"/><ellipse cx="670.0" cy="236.0" rx="11.3" ry="3.8" fill="#000" opacity="0.35"/></g></g>
<rect x="467.80" y="215.00" width="279.70" height="36.30" fill="none" stroke="#ff0000" stroke-width="3" />
<text xml:space="preserve" x="0" y="0" transform="translate(463.00,225.10)" font-family="Liberation Sans, sans-serif" font-size="7.4" fill="#222" text-anchor="end" textLength="16.45" lengthAdjust="spacingAndGlyphs" >0.12</text>
<text xml:space="preserve" x="0" y="0" transform="translate(463.00,233.70)" font-family="Liberation Sans, sans-serif" font-size="7.4" fill="#222" text-anchor="end" textLength="16.45" lengthAdjust="spacingAndGlyphs" >0.72</text>
<text xml:space="preserve" x="0" y="0" transform="translate(463.00,242.30)" font-family="Liberation Sans, sans-serif" font-size="7.4" fill="#222" text-anchor="end" textLength="14.11" lengthAdjust="spacingAndGlyphs" >065</text>
<text xml:space="preserve" x="0" y="0" transform="translate(750.80,218.30)" font-family="Liberation Sans, sans-serif" font-size="5.6" fill="#333" text-anchor="start" textLength="15.05" lengthAdjust="spacingAndGlyphs" >1.38&quot;</text>
<text xml:space="preserve" x="0" y="0" transform="translate(750.80,226.40)" font-family="Liberation Sans, sans-serif" font-size="5.6" fill="#333" text-anchor="start" textLength="29.31" lengthAdjust="spacingAndGlyphs" >(512, 442)</text>
<text xml:space="preserve" x="0" y="0" transform="translate(750.80,235.00)" font-family="Liberation Sans, sans-serif" font-size="5.6" fill="#333" text-anchor="start" textLength="28.50" lengthAdjust="spacingAndGlyphs" >20190227</text>
<text xml:space="preserve" x="0" y="0" transform="translate(750.80,241.00)" font-family="Liberation Sans, sans-serif" font-size="5.6" fill="#333" text-anchor="start" textLength="23.92" lengthAdjust="spacingAndGlyphs" >v013_03</text>
<text xml:space="preserve" x="0" y="0" transform="translate(750.80,248.50)" font-family="Liberation Sans, sans-serif" font-size="5.6" fill="#333" text-anchor="start" textLength="33.89" lengthAdjust="spacingAndGlyphs" >314_LU_048</text>
<text xml:space="preserve" x="0" y="0" transform="translate(865.30,47.00)" font-family="Liberation Sans, sans-serif" font-size="9.8" fill="#000" text-anchor="middle" textLength="42.69" lengthAdjust="spacingAndGlyphs" >With Sky</text>
<text xml:space="preserve" x="0" y="0" transform="translate(865.30,57.80)" font-family="Liberation Sans, sans-serif" font-size="9.8" fill="#000" text-anchor="middle" textLength="67.12" lengthAdjust="spacingAndGlyphs" >x, y: 512, 433</text>
<text xml:space="preserve" x="0" y="0" transform="translate(966.00,47.00)" font-family="Liberation Sans, sans-serif" font-size="9.8" fill="#000" text-anchor="middle" textLength="61.59" lengthAdjust="spacingAndGlyphs" >Clean Image</text>
<text xml:space="preserve" x="0" y="0" transform="translate(966.00,57.80)" font-family="Liberation Sans, sans-serif" font-size="9.8" fill="#000" text-anchor="middle" textLength="67.12" lengthAdjust="spacingAndGlyphs" >x, y: 512, 433</text>
<rect x="833.00" y="66.20" width="64.70" height="166.30" fill="#f2f2f2" />
<rect x="833.00" y="66.20" width="64.70" height="166.30" fill="#888" filter="url(#nz15)" opacity="1.0" />
<g mask="url(#skymask)">
<rect x="833.00" y="66.20" width="64.70" height="166.30" fill="#888" filter="url(#nz16)" opacity="1.0" />
</g>
<rect x="833.00" y="66.20" width="64.70" height="166.30" fill="url(#g12)"/>
<rect x="831.80" y="64.80" width="67.00" height="169.00" fill="none" stroke="#0000ff" stroke-width="2.8" />
<rect x="933.50" y="66.20" width="65.70" height="166.30" fill="#888" filter="url(#nz17)" opacity="1.0" />
<rect x="933.50" y="66.20" width="65.70" height="166.30" fill="url(#g13)"/>
<rect x="932.30" y="64.80" width="68.00" height="169.00" fill="none" stroke="#0000ff" stroke-width="2.8" />
<rect x="1048.00" y="60.60" width="251.50" height="150.50" fill="#fff" stroke="#444" stroke-width="1.2" />
<line x1="1048.00" y1="204.30" x2="1299.50" y2="204.30" stroke="#444" stroke-width="1.2" />
<line x1="1044.50" y1="204.30" x2="1048.00" y2="204.30" stroke="#333" stroke-width="1" />
<text xml:space="preserve" x="0" y="0" transform="translate(1042.00,207.50)" font-family="Liberation Sans, sans-serif" font-size="8.8" fill="#111" text-anchor="end" textLength="5.59" lengthAdjust="spacingAndGlyphs" >0</text>
<line x1="1044.50" y1="174.52" x2="1048.00" y2="174.52" stroke="#333" stroke-width="1" />
<text xml:space="preserve" x="0" y="0" transform="translate(1042.00,177.72)" font-family="Liberation Sans, sans-serif" font-size="8.8" fill="#111" text-anchor="end" textLength="5.59" lengthAdjust="spacingAndGlyphs" >2</text>
<line x1="1044.50" y1="144.74" x2="1048.00" y2="144.74" stroke="#333" stroke-width="1" />
<text xml:space="preserve" x="0" y="0" transform="translate(1042.00,147.94)" font-family="Liberation Sans, sans-serif" font-size="8.8" fill="#111" text-anchor="end" textLength="5.59" lengthAdjust="spacingAndGlyphs" >4</text>
<line x1="1044.50" y1="114.96" x2="1048.00" y2="114.96" stroke="#333" stroke-width="1" />
<text xml:space="preserve" x="0" y="0" transform="translate(1042.00,118.16)" font-family="Liberation Sans, sans-serif" font-size="8.8" fill="#111" text-anchor="end" textLength="5.59" lengthAdjust="spacingAndGlyphs" >6</text>
<line x1="1044.50" y1="85.18" x2="1048.00" y2="85.18" stroke="#333" stroke-width="1" />
<text xml:space="preserve" x="0" y="0" transform="translate(1042.00,88.38)" font-family="Liberation Sans, sans-serif" font-size="8.8" fill="#111" text-anchor="end" textLength="5.59" lengthAdjust="spacingAndGlyphs" >8</text>
<line x1="1087.35" y1="211.10" x2="1087.35" y2="214.60" stroke="#333" stroke-width="1" />
<text xml:space="preserve" x="0" y="0" transform="translate(1087.35,224.20)" font-family="Liberation Sans, sans-serif" font-size="8.8" fill="#111" text-anchor="middle" textLength="22.38" lengthAdjust="spacingAndGlyphs" >4480</text>
<line x1="1133.80" y1="211.10" x2="1133.80" y2="214.60" stroke="#333" stroke-width="1" />
<text xml:space="preserve" x="0" y="0" transform="translate(1133.80,224.20)" font-family="Liberation Sans, sans-serif" font-size="8.8" fill="#111" text-anchor="middle" textLength="22.38" lengthAdjust="spacingAndGlyphs" >4500</text>
<line x1="1180.25" y1="211.10" x2="1180.25" y2="214.60" stroke="#333" stroke-width="1" />
<text xml:space="preserve" x="0" y="0" transform="translate(1180.25,224.20)" font-family="Liberation Sans, sans-serif" font-size="8.8" fill="#111" text-anchor="middle" textLength="22.38" lengthAdjust="spacingAndGlyphs" >4520</text>
<line x1="1226.70" y1="211.10" x2="1226.70" y2="214.60" stroke="#333" stroke-width="1" />
<text xml:space="preserve" x="0" y="0" transform="translate(1226.70,224.20)" font-family="Liberation Sans, sans-serif" font-size="8.8" fill="#111" text-anchor="middle" textLength="22.38" lengthAdjust="spacingAndGlyphs" >4540</text>
<line x1="1273.15" y1="211.10" x2="1273.15" y2="214.60" stroke="#333" stroke-width="1" />
<text xml:space="preserve" x="0" y="0" transform="translate(1273.15,224.20)" font-family="Liberation Sans, sans-serif" font-size="8.8" fill="#111" text-anchor="middle" textLength="22.38" lengthAdjust="spacingAndGlyphs" >4560</text>
<text transform="translate(1049.5,72.5)" font-family="Liberation Sans, sans-serif" font-size="8.8" fill="#111">e<tspan dy="-3.5" font-size="6.2">−17</tspan><tspan dy="3.5">x2</tspan><tspan font-style="italic">Å</tspan></text>
<polyline points="1068.8,136.1 1069.9,136.1 1071.1,136.1 1072.3,136.1 1073.4,136.1 1074.6,136.1 1075.7,136.1 1076.9,136.1 1078.1,136.1 1079.2,136.1 1080.4,136.1 1081.5,136.1 1082.7,136.1 1083.9,136.1 1085.0,136.1 1086.2,136.1 1087.3,136.1 1088.5,136.1 1089.7,136.1 1090.8,136.1 1092.0,136.1 1093.2,136.1 1094.3,136.1 1095.5,136.1 1096.6,136.1 1097.8,136.1 1099.0,136.1 1100.1,136.1 1101.3,136.1 1102.4,136.1 1103.6,136.1 1104.8,136.1 1105.9,136.1 1107.1,136.1 1108.3,136.1 1109.4,136.1 1110.6,136.1 1111.7,136.1 1112.9,136.1 1114.1,136.1 1115.2,136.1 1116.4,136.1 1117.5,136.1 1118.7,136.1 1119.9,136.1 1121.0,136.1 1122.2,136.1 1123.3,136.1 1124.5,136.1 1125.7,136.1 1126.8,136.1 1128.0,136.1 1129.2,136.1 1130.3,136.1 1131.5,136.1 1132.6,136.1 1133.8,136.1 1135.0,136.1 1136.1,136.1 1137.3,136.1 1138.4,136.1 1139.6,136.1 1140.8,136.1 1141.9,136.0 1143.1,136.0 1144.3,135.9 1145.4,135.8 1146.6,135.7 1147.7,135.5 1148.9,135.3 1150.1,134.9 1151.2,134.4 1152.4,133.8 1153.5,133.0 1154.7,132.0 1155.9,130.7 1157.0,129.1 1158.2,127.2 1159.3,125.0 1160.5,122.5 1161.7,119.6 1162.8,116.5 1164.0,113.2 1165.2,109.7 1166.3,106.3 1167.5,102.8 1168.6,99.6 1169.8,96.7 1171.0,94.3 1172.1,92.4 1173.3,91.2 1174.4,90.7 1175.6,90.9 1176.8,91.9 1177.9,93.5 1179.1,95.7 1180.2,98.4 1181.4,101.5 1182.6,104.9 1183.7,108.3 1184.9,111.8 1186.1,115.2 1187.2,118.4 1188.4,121.4 1189.5,124.0 1190.7,126.4 1191.9,128.4 1193.0,130.1 1194.2,131.5 1195.3,132.6 1196.5,133.5 1197.7,134.2 1198.8,134.7 1200.0,135.1 1201.2,135.4 1202.3,135.6 1203.5,135.8 1204.6,135.9 1205.8,136.0 1207.0,136.0 1208.1,136.0 1209.3,136.1 1210.4,136.1 1211.6,136.1 1212.8,136.1 1213.9,136.1 1215.1,136.1 1216.2,136.1 1217.4,136.1 1218.6,136.1 1219.7,136.1 1220.9,136.1 1222.1,136.1 1223.2,136.1 1224.4,136.1 1225.5,136.1 1226.7,136.1 1227.9,136.1 1229.0,136.1 1230.2,136.1 1231.3,136.1 1232.5,136.1 1233.7,136.1 1234.8,136.1 1236.0,136.1 1237.2,136.1 1238.3,136.1 1239.5,136.1 1240.6,136.1 1241.8,136.1 1243.0,136.1 1244.1,136.1 1245.3,136.1 1246.4,136.1 1247.6,136.1 1248.8,136.1 1249.9,136.1 1251.1,136.1 1252.2,136.1 1253.4,136.1 1254.6,136.1 1255.7,136.1 1256.9,136.1 1258.1,136.1 1259.2,136.1 1260.4,136.1 1261.5,136.1 1262.7,136.1 1263.9,136.1 1265.0,136.1 1266.2,136.1 1267.3,136.1 1268.5,136.1 1269.7,136.1 1270.8,136.1 1272.0,136.1 1273.1,136.1 1274.3,136.1 1275.5,136.1 1276.6,136.1 1277.8,136.1 1279.0,136.1 1280.1,136.1 1281.3,136.1 1282.4,136.1" fill="none" stroke="#3a3a3a" stroke-width="2.2" stroke-linejoin="round" />
<line x1="1059.48" y1="145.20" x2="1059.48" y2="167.80" stroke="#1f77b4" stroke-width="2.0" />
<circle cx="1059.48" cy="156.50" r="2.1" fill="#1f77b4"/>
<line x1="1064.12" y1="145.20" x2="1064.12" y2="167.80" stroke="#1f77b4" stroke-width="2.0" />
<circle cx="1064.12" cy="156.50" r="2.1" fill="#1f77b4"/>
<line x1="1068.77" y1="104.55" x2="1068.77" y2="127.15" stroke="#1f77b4" stroke-width="2.0" />
<circle cx="1068.77" cy="115.85" r="2.1" fill="#1f77b4"/>
<line x1="1073.41" y1="103.06" x2="1073.41" y2="125.66" stroke="#1f77b4" stroke-width="2.0" />
<circle cx="1073.41" cy="114.36" r="2.1" fill="#1f77b4"/>
<line x1="1078.06" y1="85.94" x2="1078.06" y2="108.54" stroke="#1f77b4" stroke-width="2.0" />
<circle cx="1078.06" cy="97.24" r="2.1" fill="#1f77b4"/>
<line x1="1082.70" y1="99.94" x2="1082.70" y2="122.54" stroke="#1f77b4" stroke-width="2.0" />
<circle cx="1082.70" cy="111.24" r="2.1" fill="#1f77b4"/>
<line x1="1087.35" y1="97.11" x2="1087.35" y2="119.71" stroke="#1f77b4" stroke-width="2.0" />
<circle cx="1087.35" cy="108.41" r="2.1" fill="#1f77b4"/>
<line x1="1091.99" y1="109.47" x2="1091.99" y2="132.07" stroke="#1f77b4" stroke-width="2.0" />
<circle cx="1091.99" cy="120.77" r="2.1" fill="#1f77b4"/>
<line x1="1096.64" y1="111.55" x2="1096.64" y2="134.15" stroke="#1f77b4" stroke-width="2.0" />
<circle cx="1096.64" cy="122.85" r="2.1" fill="#1f77b4"/>
<line x1="1101.28" y1="129.27" x2="1101.28" y2="151.87" stroke="#1f77b4" stroke-width="2.0" />
<circle cx="1101.28" cy="140.57" r="2.1" fill="#1f77b4"/>
<line x1="1105.93" y1="115.57" x2="1105.93" y2="138.17" stroke="#1f77b4" stroke-width="2.0" />
<circle cx="1105.93" cy="126.87" r="2.1" fill="#1f77b4"/>
<line x1="1110.58" y1="106.64" x2="1110.58" y2="129.24" stroke="#1f77b4" stroke-width="2.0" />
<circle cx="1110.58" cy="117.94" r="2.1" fill="#1f77b4"/>
<line x1="1115.22" y1="85.35" x2="1115.22" y2="107.95" stroke="#1f77b4" stroke-width="2.0" />
<circle cx="1115.22" cy="96.65" r="2.1" fill="#1f77b4"/>
<line x1="1119.87" y1="99.34" x2="1119.87" y2="121.94" stroke="#1f77b4" stroke-width="2.0" />
<circle cx="1119.87" cy="110.64" r="2.1" fill="#1f77b4"/>
<line x1="1124.51" y1="107.38" x2="1124.51" y2="129.98" stroke="#1f77b4" stroke-width="2.0" />
<circle cx="1124.51" cy="118.68" r="2.1" fill="#1f77b4"/>
<line x1="1129.15" y1="87.28" x2="1129.15" y2="109.88" stroke="#1f77b4" stroke-width="2.0" />
<circle cx="1129.15" cy="98.58" r="2.1" fill="#1f77b4"/>
<line x1="1133.80" y1="74.62" x2="1133.80" y2="97.22" stroke="#1f77b4" stroke-width="2.0" />
<circle cx="1133.80" cy="85.92" r="2.1" fill="#1f77b4"/>
<line x1="1138.44" y1="103.51" x2="1138.44" y2="126.11" stroke="#1f77b4" stroke-width="2.0" />
<circle cx="1138.44" cy="114.81" r="2.1" fill="#1f77b4"/>
<line x1="1143.09" y1="129.27" x2="1143.09" y2="151.87" stroke="#1f77b4" stroke-width="2.0" />
<circle cx="1143.09" cy="140.57" r="2.1" fill="#1f77b4"/>
<line x1="1147.73" y1="153.54" x2="1147.73" y2="176.14" stroke="#1f77b4" stroke-width="2.0" />
<circle cx="1147.73" cy="164.84" r="2.1" fill="#1f77b4"/>
<line x1="1152.38" y1="138.95" x2="1152.38" y2="161.55" stroke="#1f77b4" stroke-width="2.0" />
<circle cx="1152.38" cy="150.25" r="2.1" fill="#1f77b4"/>
<line x1="1157.02" y1="110.36" x2="1157.02" y2="132.96" stroke="#1f77b4" stroke-width="2.0" />
<circle cx="1157.02" cy="121.66" r="2.1" fill="#1f77b4"/>
<line x1="1161.67" y1="88.17" x2="1161.67" y2="110.77" stroke="#1f77b4" stroke-width="2.0" />
<circle cx="1161.67" cy="99.47" r="2.1" fill="#1f77b4"/>
<line x1="1166.32" y1="85.49" x2="1166.32" y2="108.09" stroke="#1f77b4" stroke-width="2.0" />
<circle cx="1166.32" cy="96.79" r="2.1" fill="#1f77b4"/>
<line x1="1170.96" y1="95.47" x2="1170.96" y2="118.07" stroke="#1f77b4" stroke-width="2.0" />
<circle cx="1170.96" cy="106.77" r="2.1" fill="#1f77b4"/>
<line x1="1175.61" y1="67.33" x2="1175.61" y2="89.93" stroke="#1f77b4" stroke-width="2.0" />
<circle cx="1175.61" cy="78.63" r="2.1" fill="#1f77b4"/>
<line x1="1180.25" y1="76.86" x2="1180.25" y2="99.46" stroke="#1f77b4" stroke-width="2.0" />
<circle cx="1180.25" cy="88.16" r="2.1" fill="#1f77b4"/>
<line x1="1184.89" y1="90.71" x2="1184.89" y2="113.31" stroke="#1f77b4" stroke-width="2.0" />
<circle cx="1184.89" cy="102.01" r="2.1" fill="#1f77b4"/>
<line x1="1189.54" y1="121.23" x2="1189.54" y2="143.83" stroke="#1f77b4" stroke-width="2.0" />
<circle cx="1189.54" cy="132.53" r="2.1" fill="#1f77b4"/>
<line x1="1194.18" y1="142.82" x2="1194.18" y2="165.42" stroke="#1f77b4" stroke-width="2.0" />
<circle cx="1194.18" cy="154.12" r="2.1" fill="#1f77b4"/>
<line x1="1198.83" y1="110.66" x2="1198.83" y2="133.26" stroke="#1f77b4" stroke-width="2.0" />
<circle cx="1198.83" cy="121.96" r="2.1" fill="#1f77b4"/>
<line x1="1203.47" y1="98.45" x2="1203.47" y2="121.05" stroke="#1f77b4" stroke-width="2.0" />
<circle cx="1203.47" cy="109.75" r="2.1" fill="#1f77b4"/>
<line x1="1208.12" y1="140.88" x2="1208.12" y2="163.49" stroke="#1f77b4" stroke-width="2.0" />
<circle cx="1208.12" cy="152.19" r="2.1" fill="#1f77b4"/>
<line x1="1212.76" y1="135.97" x2="1212.76" y2="158.57" stroke="#1f77b4" stroke-width="2.0" />
<circle cx="1212.76" cy="147.27" r="2.1" fill="#1f77b4"/>
<line x1="1217.41" y1="145.35" x2="1217.41" y2="167.95" stroke="#1f77b4" stroke-width="2.0" />
<circle cx="1217.41" cy="156.65" r="2.1" fill="#1f77b4"/>
<line x1="1222.05" y1="135.08" x2="1222.05" y2="157.68" stroke="#1f77b4" stroke-width="2.0" />
<circle cx="1222.05" cy="146.38" r="2.1" fill="#1f77b4"/>
<line x1="1226.70" y1="147.14" x2="1226.70" y2="169.74" stroke="#1f77b4" stroke-width="2.0" />
<circle cx="1226.70" cy="158.44" r="2.1" fill="#1f77b4"/>
<line x1="1231.35" y1="150.56" x2="1231.35" y2="173.16" stroke="#1f77b4" stroke-width="2.0" />
<circle cx="1231.35" cy="161.86" r="2.1" fill="#1f77b4"/>
<line x1="1235.99" y1="124.80" x2="1235.99" y2="147.40" stroke="#1f77b4" stroke-width="2.0" />
<circle cx="1235.99" cy="136.10" r="2.1" fill="#1f77b4"/>
<line x1="1240.63" y1="132.55" x2="1240.63" y2="155.15" stroke="#1f77b4" stroke-width="2.0" />
<circle cx="1240.63" cy="143.85" r="2.1" fill="#1f77b4"/>
<line x1="1245.28" y1="124.51" x2="1245.28" y2="147.11" stroke="#1f77b4" stroke-width="2.0" />
<circle cx="1245.28" cy="135.81" r="2.1" fill="#1f77b4"/>
<line x1="1249.92" y1="149.37" x2="1249.92" y2="171.97" stroke="#1f77b4" stroke-width="2.0" />
<circle cx="1249.92" cy="160.67" r="2.1" fill="#1f77b4"/>
<line x1="1254.57" y1="121.83" x2="1254.57" y2="144.43" stroke="#1f77b4" stroke-width="2.0" />
<circle cx="1254.57" cy="133.13" r="2.1" fill="#1f77b4"/>
<line x1="1259.21" y1="121.83" x2="1259.21" y2="144.43" stroke="#1f77b4" stroke-width="2.0" />
<circle cx="1259.21" cy="133.13" r="2.1" fill="#1f77b4"/>
<line x1="1263.86" y1="144.16" x2="1263.86" y2="166.76" stroke="#1f77b4" stroke-width="2.0" />
<circle cx="1263.86" cy="155.46" r="2.1" fill="#1f77b4"/>
<line x1="1268.50" y1="127.04" x2="1268.50" y2="149.64" stroke="#1f77b4" stroke-width="2.0" />
<circle cx="1268.50" cy="138.34" r="2.1" fill="#1f77b4"/>
<line x1="1273.15" y1="125.10" x2="1273.15" y2="147.70" stroke="#1f77b4" stroke-width="2.0" />
<circle cx="1273.15" cy="136.40" r="2.1" fill="#1f77b4"/>
<line x1="1277.79" y1="126.00" x2="1277.79" y2="148.60" stroke="#1f77b4" stroke-width="2.0" />
<circle cx="1277.79" cy="137.30" r="2.1" fill="#1f77b4"/>
<line x1="1282.44" y1="129.27" x2="1282.44" y2="151.87" stroke="#1f77b4" stroke-width="2.0" />
<circle cx="1282.44" cy="140.57" r="2.1" fill="#1f77b4"/>
<line x1="1287.09" y1="122.27" x2="1287.09" y2="144.87" stroke="#1f77b4" stroke-width="2.0" />
<circle cx="1287.09" cy="133.57" r="2.1" fill="#1f77b4"/>
<rect x="101.60" y="348.60" width="1197.90" height="83.60" fill="#fff" />
<g clip-path="url(#specclip)">
<rect x="674.50" y="348.60" width="54.30" height="83.60" fill="#bfbf00" />
<polygon points="101.6,408.0 110.0,407.5 120.0,409.0 160.0,410.0 200.0,411.0 240.0,413.0 300.0,414.5 375.0,416.3 450.0,417.0 640.0,418.3 900.0,418.5 1100.0,418.5 1275.0,418.5 1291.0,421.5 1300.0,422.0 1300.0,422.0 1291.0,422.5 1275.0,425.5 1100.0,425.5 900.0,425.5 640.0,425.7 450.0,427.0 375.0,427.7 300.0,429.5 240.0,431.0 200.0,433.0 160.0,434.0 120.0,435.0 110.0,436.5 101.6,436.0" fill="#808080" opacity="0.5"/>
<line x1="101.60" y1="422.00" x2="1299.50" y2="422.00" stroke="#7a7a7a" stroke-width="2.2" opacity="0.9"/>
<rect x="123.90" y="348.60" width="11.90" height="83.60" fill="#9a9a9a" stroke="#333" stroke-width="1.0" opacity="0.95"/>
<line x1="123.90" y1="360.60" x2="135.80" y2="351.60" stroke="#222" stroke-width="1.0" />
<line x1="123.90" y1="384.10" x2="135.80" y2="375.10" stroke="#222" stroke-width="1.0" />
<line x1="123.90" y1="407.60" x2="135.80" y2="398.60" stroke="#222" stroke-width="1.0" />
<line x1="123.90" y1="431.10" x2="135.80" y2="422.10" stroke="#222" stroke-width="1.0" />
<rect x="1254.40" y="348.60" width="6.40" height="83.60" fill="#9a9a9a" stroke="#333" stroke-width="1.0" opacity="0.95"/>
<line x1="1254.40" y1="360.60" x2="1260.80" y2="351.60" stroke="#222" stroke-width="1.0" />
<line x1="1254.40" y1="384.10" x2="1260.80" y2="375.10" stroke="#222" stroke-width="1.0" />
<line x1="1254.40" y1="407.60" x2="1260.80" y2="398.60" stroke="#222" stroke-width="1.0" />
<line x1="1254.40" y1="431.10" x2="1260.80" y2="422.10" stroke="#222" stroke-width="1.0" />
<line x1="262.00" y1="348.60" x2="262.00" y2="432.20" stroke="#555" stroke-width="1.3" stroke-dasharray="4.5,2.5"/>
<line x1="310.50" y1="348.60" x2="310.50" y2="432.20" stroke="#555" stroke-width="1.3" stroke-dasharray="4.5,2.5"/>
<line x1="323.40" y1="348.60" x2="323.40" y2="432.20" stroke="#555" stroke-width="1.3" stroke-dasharray="4.5,2.5"/>
<line x1="385.60" y1="348.60" x2="385.60" y2="432.20" stroke="#555" stroke-width="1.3" stroke-dasharray="4.5,2.5"/>
<line x1="442.00" y1="348.60" x2="442.00" y2="432.20" stroke="#555" stroke-width="1.3" stroke-dasharray="4.5,2.5"/>
<line x1="559.80" y1="348.60" x2="559.80" y2="432.20" stroke="#555" stroke-width="1.3" stroke-dasharray="4.5,2.5"/>
<line x1="587.00" y1="348.60" x2="587.00" y2="432.20" stroke="#555" stroke-width="1.3" stroke-dasharray="4.5,2.5"/>
<line x1="632.50" y1="348.60" x2="632.50" y2="432.20" stroke="#555" stroke-width="1.3" stroke-dasharray="4.5,2.5"/>
<line x1="809.00" y1="348.60" x2="809.00" y2="432.20" stroke="#555" stroke-width="1.3" stroke-dasharray="4.5,2.5"/>
<line x1="872.50" y1="348.60" x2="872.50" y2="432.20" stroke="#555" stroke-width="1.3" stroke-dasharray="4.5,2.5"/>
<line x1="963.20" y1="348.60" x2="963.20" y2="432.20" stroke="#555" stroke-width="1.3" stroke-dasharray="4.5,2.5"/>
<line x1="1027.80" y1="348.60" x2="1027.80" y2="432.20" stroke="#555" stroke-width="1.3" stroke-dasharray="4.5,2.5"/>
<line x1="702.00" y1="348.60" x2="702.00" y2="432.20" stroke="#333" stroke-width="1.3" stroke-dasharray="1.5,1.5"/>
<polyline points="101.5,424.0 103.0,426.5 105.5,418.0 107.0,421.0 108.0,415.0 109.5,432.0 111.8,411.0 113.5,427.0 115.0,421.0 116.5,417.0 117.5,418.0 118.8,402.0 121.0,415.0 123.5,406.0 124.8,418.0 127.0,401.5 128.5,404.0 130.0,419.0 131.8,411.0 133.3,427.5 135.0,410.0 137.2,429.5 138.5,408.5 141.0,419.0 143.0,421.0 144.5,418.0 146.2,410.5 148.0,425.5 150.0,421.0 152.5,418.0 154.8,406.0 156.5,422.0 158.0,415.0 160.0,419.0 161.5,414.0 163.5,430.0 165.5,411.0 167.0,417.0 169.0,426.0 171.5,415.0 174.0,428.5 175.2,418.5 176.8,422.0 178.5,421.0 180.0,432.0 182.2,418.5 184.0,417.0 187.5,404.5 189.5,420.5 192.5,413.0 194.2,422.0 196.0,416.0 199.0,416.5 201.0,416.5 203.0,425.0 206.0,416.0 208.5,411.0 210.5,405.0 213.0,415.0 214.0,408.5 215.5,416.5 218.5,410.5 221.0,393.5 223.5,404.0 226.0,419.5 229.0,411.5 231.5,410.0 234.0,404.5 237.0,418.0 240.0,404.0 242.0,400.0 244.5,379.5 248.0,397.0 249.5,397.5 252.0,405.0 253.5,401.0 255.0,390.0 256.5,391.0 257.5,388.0 259.0,391.0 260.8,383.0 262.0,384.0 263.5,389.0 267.0,394.0 269.5,387.0 272.5,391.5 273.5,390.5 275.0,390.5 280.5,425.0 284.5,395.0 287.0,410.5 289.5,403.5 291.0,404.0 293.0,413.5 295.0,402.5 297.5,402.0 299.5,397.0 302.0,399.0 304.5,408.0 306.0,396.0 308.0,394.0 310.5,380.0 315.0,398.5 317.5,389.5 319.5,396.0 321.5,389.0 322.8,389.0 324.2,397.0 326.5,388.0 328.5,387.0 330.5,388.5 334.0,417.5 336.0,410.0 339.0,395.0 343.0,419.0 345.5,406.0 348.5,405.0 350.0,399.5 352.0,397.5 355.0,389.0 356.5,396.5 360.0,387.0 362.5,402.5 365.0,393.0 367.5,393.0 370.0,387.0 373.0,395.0 378.0,399.5 380.0,396.5 382.0,388.0 383.5,387.0 384.8,383.5 386.5,389.5 388.0,393.5 389.5,389.0 391.8,381.5 393.5,387.0 396.5,425.0 399.5,415.0 402.0,421.0 404.5,405.0 407.5,389.0 409.0,390.0 410.5,386.0 411.5,396.0 413.0,403.0 415.5,410.0 417.0,411.5 418.5,418.0 420.5,409.0 424.5,390.0 427.5,391.5 430.5,393.5 432.5,391.0 434.0,386.0 436.0,385.5 437.5,382.5 439.5,384.5 442.0,372.5 444.5,380.0 446.0,388.0 448.0,387.5 449.2,384.5 451.5,398.0 455.0,407.0 457.5,422.0 460.5,414.0 464.5,389.0 466.0,389.0 468.0,396.5 470.5,384.5 474.0,401.0 477.5,407.5 480.0,387.5 483.5,398.5 486.5,388.0 488.0,391.5 490.0,390.0 493.5,399.0 495.5,389.5 498.0,391.0 500.0,398.0 501.0,392.5 503.0,400.0 505.0,391.5 508.5,393.0 510.5,403.0 515.0,390.5 517.5,386.0 518.5,387.0 520.8,382.5 522.0,391.0 523.5,397.5 524.5,399.0 528.0,387.5 529.5,390.0 532.5,412.0 534.0,402.0 535.3,407.5 537.0,399.5 539.5,393.5 541.0,399.5 544.5,383.5 547.0,387.0 548.5,391.5 550.5,384.5 553.0,396.0 556.0,385.0 558.5,379.5 560.0,378.0 561.5,379.5 562.5,377.5 564.0,383.5 565.0,380.0 565.8,382.0 567.0,374.0 568.0,385.5 570.0,387.0 572.5,396.5 576.0,417.0 579.0,424.5 582.0,411.5 584.0,412.0 586.5,401.0 588.0,383.0 589.5,383.0 591.2,392.0 592.5,383.0 595.5,394.0 596.5,395.0 601.0,419.0 603.5,414.0 605.0,411.5 608.0,390.0 609.5,411.0 612.5,397.0 614.0,399.0 616.0,405.0 618.5,408.0 620.0,393.0 622.0,392.5 623.5,396.0 625.0,393.0 627.0,395.0 628.5,392.0 630.0,394.0 631.5,389.0 633.5,391.0 634.5,389.0 636.0,392.5 637.5,397.0 639.0,388.5 641.5,399.5 644.5,418.5 646.5,414.0 648.5,410.0 651.0,404.0 653.0,395.5 654.5,398.0 656.0,391.0 659.0,389.5 660.0,392.0 661.0,403.0 662.5,392.5 664.5,399.0 666.0,396.0 667.5,398.0 669.0,391.5 673.5,408.5 675.0,397.0 677.5,393.0 680.5,397.5 683.0,404.0 687.0,392.5 689.0,397.5 691.5,389.0 695.0,411.0 699.0,393.0 701.0,394.0 702.0,387.0 704.0,391.5 706.5,407.5 709.0,396.0 710.0,406.5 713.0,407.0 715.0,408.0 716.5,409.5 717.5,404.0 719.0,403.0 720.5,409.0 721.5,402.0 723.0,402.0 724.8,407.5 727.0,402.5 730.5,404.0 733.5,414.0 736.5,402.5 738.5,401.5 740.0,408.0 742.0,410.0 744.0,405.5 746.5,408.5 748.0,404.0 749.5,402.0 753.0,397.5 756.5,400.5 759.0,405.0 761.5,398.5 763.5,401.0 765.0,397.0 767.0,397.5 769.0,407.5 771.5,396.0 773.5,394.5 775.0,396.0 777.0,394.0 779.5,399.5 782.0,397.5 785.0,405.5 788.0,401.5 790.0,404.0 793.5,412.5 796.5,399.5 798.5,396.5 800.8,399.0 804.5,394.5 806.5,396.5 808.5,396.5 810.0,402.5 814.8,392.0 819.0,399.5 821.2,395.5 823.0,397.0 825.5,405.0 828.0,401.5 831.0,406.0 834.0,411.5 837.5,424.5 839.5,419.5 841.5,421.0 844.0,417.0 848.0,405.0 851.0,416.5 854.0,416.0 857.0,416.5 860.0,403.5 862.0,407.0 864.5,397.5 866.5,407.5 869.5,397.5 873.0,403.0 876.0,397.0 879.5,402.5 882.0,407.0 884.5,414.0 888.0,402.0 889.5,401.5 892.0,406.0 895.0,399.0 899.5,407.5 903.0,419.0 905.5,421.0 908.5,423.5 910.0,417.0 911.5,407.5 913.5,407.0 915.5,409.0 917.0,409.0 919.5,399.5 921.5,407.5 923.0,409.0 925.0,415.0 926.5,405.5 930.0,400.5 932.5,395.5 934.0,400.5 937.0,395.5 939.5,405.5 943.0,399.0 946.5,396.0 949.0,399.0 952.5,390.5 955.0,397.0 958.5,388.5 960.0,389.5 963.0,384.5 966.0,386.0 968.0,393.5 970.0,391.0 972.5,389.0 977.0,405.0 980.0,394.0 982.0,391.0 984.0,390.0 986.5,390.0 989.0,395.5 991.5,382.5 993.5,380.0 996.0,384.0 999.0,380.0 1002.0,373.5 1004.5,381.5 1006.8,360.5 1009.0,365.5 1011.8,378.0 1015.0,352.5 1018.0,347.0 1020.0,346.0 1026.0,347.0 1032.0,338.0 1037.0,342.0 1038.0,350.0 1040.0,358.0 1043.5,369.5 1045.0,368.0 1046.8,361.5 1048.5,366.5 1051.0,373.0 1053.0,368.0 1055.0,373.5 1059.5,370.0 1062.0,372.5 1064.0,371.0 1066.0,368.5 1068.0,370.5 1070.5,386.5 1073.0,375.5 1076.0,384.0 1079.5,368.0 1082.0,373.0 1085.0,375.0 1088.0,378.0 1091.0,372.5 1093.5,380.0 1096.0,382.0 1098.0,381.0 1100.5,381.5 1102.5,386.0 1106.0,388.0 1108.5,391.0 1111.0,390.5 1113.5,390.0 1116.0,400.5 1118.5,392.0 1121.0,394.0 1123.0,391.0 1125.0,394.0 1126.5,388.5 1129.0,401.0 1132.5,388.5 1135.5,396.0 1138.0,394.5 1141.0,397.5 1145.0,396.5 1148.0,398.5 1149.5,394.0 1152.5,399.5 1155.0,394.0 1157.0,400.5 1159.0,400.5 1161.0,396.5 1164.5,402.0 1167.0,402.0 1169.0,402.5 1171.0,397.0 1174.5,398.0 1177.5,404.5 1180.0,396.5 1181.5,399.0 1184.5,404.5 1186.5,413.5 1188.0,407.0 1190.0,399.0 1192.0,399.5 1193.5,399.0 1196.0,402.5 1198.5,398.5 1200.5,402.0 1203.0,406.5 1204.5,404.0 1206.5,401.0 1208.0,399.5 1209.0,397.5 1210.5,401.0 1214.5,398.5 1217.5,402.5 1219.0,399.5 1223.0,400.0 1225.5,400.0 1227.5,402.5 1230.0,403.5 1232.5,401.5 1236.5,396.5 1239.5,403.0 1243.0,396.5 1245.5,401.5 1248.0,404.0 1250.0,401.0 1253.0,401.5 1256.0,409.0 1260.0,399.5 1263.0,391.5 1265.5,406.0 1267.0,394.0 1270.5,407.0 1273.0,403.0 1275.0,397.5 1277.5,402.5 1280.5,409.0 1282.0,401.0 1285.0,401.5 1287.0,397.0 1291.0,403.0 1293.5,402.0 1295.5,400.5 1299.5,401.0" fill="none" stroke="#0000ff" stroke-width="1.35" stroke-linejoin="round" />
</g>
<rect x="101.60" y="348.60" width="1197.90" height="83.60" fill="none" stroke="#333" stroke-width="1.2" />
<line x1="98.10" y1="422.00" x2="101.60" y2="422.00" stroke="#333" stroke-width="1" />
<text xml:space="preserve" x="0" y="0" transform="translate(95.60,425.50)" font-family="Liberation Sans, sans-serif" font-size="9.6" fill="#111" text-anchor="end" textLength="6.11" lengthAdjust="spacingAndGlyphs" >0</text>
<line x1="98.10" y1="380.20" x2="101.60" y2="380.20" stroke="#333" stroke-width="1" />
<text xml:space="preserve" x="0" y="0" transform="translate(95.60,383.70)" font-family="Liberation Sans, sans-serif" font-size="9.6" fill="#111" text-anchor="end" textLength="12.22" lengthAdjust="spacingAndGlyphs" >10</text>
<line x1="103.50" y1="432.20" x2="103.50" y2="435.70" stroke="#333" stroke-width="1" />
<text xml:space="preserve" x="0" y="0" transform="translate(103.50,447.30)" font-family="Liberation Sans, sans-serif" font-size="9.6" fill="#111" text-anchor="middle" textLength="24.44" lengthAdjust="spacingAndGlyphs" >3500</text>
<line x1="162.30" y1="432.20" x2="162.30" y2="435.70" stroke="#333" stroke-width="1" />
<text xml:space="preserve" x="0" y="0" transform="translate(162.30,447.30)" font-family="Liberation Sans, sans-serif" font-size="9.6" fill="#111" text-anchor="middle" textLength="24.44" lengthAdjust="spacingAndGlyphs" >3600</text>
<line x1="221.10" y1="432.20" x2="221.10" y2="435.70" stroke="#333" stroke-width="1" />
<text xml:space="preserve" x="0" y="0" transform="translate(221.10,447.30)" font-family="Liberation Sans, sans-serif" font-size="9.6" fill="#111" text-anchor="middle" textLength="24.44" lengthAdjust="spacingAndGlyphs" >3700</text>
<line x1="279.90" y1="432.20" x2="279.90" y2="435.70" stroke="#333" stroke-width="1" />
<text xml:space="preserve" x="0" y="0" transform="translate(279.90,447.30)" font-family="Liberation Sans, sans-serif" font-size="9.6" fill="#111" text-anchor="middle" textLength="24.44" lengthAdjust="spacingAndGlyphs" >3800</text>
<line x1="338.70" y1="432.20" x2="338.70" y2="435.70" stroke="#333" stroke-width="1" />
<text xml:space="preserve" x="0" y="0" transform="translate(338.70,447.30)" font-family="Liberation Sans, sans-serif" font-size="9.6" fill="#111" text-anchor="middle" textLength="24.44" lengthAdjust="spacingAndGlyphs" >3900</text>
<line x1="397.50" y1="432.20" x2="397.50" y2="435.70" stroke="#333" stroke-width="1" />
<text xml:space="preserve" x="0" y="0" transform="translate(397.50,447.30)" font-family="Liberation Sans, sans-serif" font-size="9.6" fill="#111" text-anchor="middle" textLength="24.44" lengthAdjust="spacingAndGlyphs" >4000</text>
<line x1="456.30" y1="432.20" x2="456.30" y2="435.70" stroke="#333" stroke-width="1" />
<text xml:space="preserve" x="0" y="0" transform="translate(456.30,447.30)" font-family="Liberation Sans, sans-serif" font-size="9.6" fill="#111" text-anchor="middle" textLength="24.44" lengthAdjust="spacingAndGlyphs" >4100</text>
<line x1="515.10" y1="432.20" x2="515.10" y2="435.70" stroke="#333" stroke-width="1" />
<text xml:space="preserve" x="0" y="0" transform="translate(515.10,447.30)" font-family="Liberation Sans, sans-serif" font-size="9.6" fill="#111" text-anchor="middle" textLength="24.44" lengthAdjust="spacingAndGlyphs" >4200</text>
<line x1="573.90" y1="432.20" x2="573.90" y2="435.70" stroke="#333" stroke-width="1" />
<text xml:space="preserve" x="0" y="0" transform="translate(573.90,447.30)" font-family="Liberation Sans, sans-serif" font-size="9.6" fill="#111" text-anchor="middle" textLength="24.44" lengthAdjust="spacingAndGlyphs" >4300</text>
<line x1="632.70" y1="432.20" x2="632.70" y2="435.70" stroke="#333" stroke-width="1" />
<text xml:space="preserve" x="0" y="0" transform="translate(632.70,447.30)" font-family="Liberation Sans, sans-serif" font-size="9.6" fill="#111" text-anchor="middle" textLength="24.44" lengthAdjust="spacingAndGlyphs" >4400</text>
<line x1="691.50" y1="432.20" x2="691.50" y2="435.70" stroke="#333" stroke-width="1" />
<text xml:space="preserve" x="0" y="0" transform="translate(691.50,447.30)" font-family="Liberation Sans, sans-serif" font-size="9.6" fill="#111" text-anchor="middle" textLength="24.44" lengthAdjust="spacingAndGlyphs" >4500</text>
<line x1="750.30" y1="432.20" x2="750.30" y2="435.70" stroke="#333" stroke-width="1" />
<text xml:space="preserve" x="0" y="0" transform="translate(750.30,447.30)" font-family="Liberation Sans, sans-serif" font-size="9.6" fill="#111" text-anchor="middle" textLength="24.44" lengthAdjust="spacingAndGlyphs" >4600</text>
<line x1="809.10" y1="432.20" x2="809.10" y2="435.70" stroke="#333" stroke-width="1" />
<text xml:space="preserve" x="0" y="0" transform="translate(809.10,447.30)" font-family="Liberation Sans, sans-serif" font-size="9.6" fill="#111" text-anchor="middle" textLength="24.44" lengthAdjust="spacingAndGlyphs" >4700</text>
<line x1="867.90" y1="432.20" x2="867.90" y2="435.70" stroke="#333" stroke-width="1" />
<text xml:space="preserve" x="0" y="0" transform="translate(867.90,447.30)" font-family="Liberation Sans, sans-serif" font-size="9.6" fill="#111" text-anchor="middle" textLength="24.44" lengthAdjust="spacingAndGlyphs" >4800</text>
<line x1="926.70" y1="432.20" x2="926.70" y2="435.70" stroke="#333" stroke-width="1" />
<text xml:space="preserve" x="0" y="0" transform="translate(926.70,447.30)" font-family="Liberation Sans, sans-serif" font-size="9.6" fill="#111" text-anchor="middle" textLength="24.44" lengthAdjust="spacingAndGlyphs" >4900</text>
<line x1="985.50" y1="432.20" x2="985.50" y2="435.70" stroke="#333" stroke-width="1" />
<text xml:space="preserve" x="0" y="0" transform="translate(985.50,447.30)" font-family="Liberation Sans, sans-serif" font-size="9.6" fill="#111" text-anchor="middle" textLength="24.44" lengthAdjust="spacingAndGlyphs" >5000</text>
<line x1="1044.30" y1="432.20" x2="1044.30" y2="435.70" stroke="#333" stroke-width="1" />
<text xml:space="preserve" x="0" y="0" transform="translate(1044.30,447.30)" font-family="Liberation Sans, sans-serif" font-size="9.6" fill="#111" text-anchor="middle" textLength="24.44" lengthAdjust="spacingAndGlyphs" >5100</text>
<line x1="1103.10" y1="432.20" x2="1103.10" y2="435.70" stroke="#333" stroke-width="1" />
<text xml:space="preserve" x="0" y="0" transform="translate(1103.10,447.30)" font-family="Liberation Sans, sans-serif" font-size="9.6" fill="#111" text-anchor="middle" textLength="24.44" lengthAdjust="spacingAndGlyphs" >5200</text>
<line x1="1161.90" y1="432.20" x2="1161.90" y2="435.70" stroke="#333" stroke-width="1" />
<text xml:space="preserve" x="0" y="0" transform="translate(1161.90,447.30)" font-family="Liberation Sans, sans-serif" font-size="9.6" fill="#111" text-anchor="middle" textLength="24.44" lengthAdjust="spacingAndGlyphs" >5300</text>
<line x1="1220.70" y1="432.20" x2="1220.70" y2="435.70" stroke="#333" stroke-width="1" />
<text xml:space="preserve" x="0" y="0" transform="translate(1220.70,447.30)" font-family="Liberation Sans, sans-serif" font-size="9.6" fill="#111" text-anchor="middle" textLength="24.44" lengthAdjust="spacingAndGlyphs" >5400</text>
<line x1="1279.50" y1="432.20" x2="1279.50" y2="435.70" stroke="#333" stroke-width="1" />
<text xml:space="preserve" x="0" y="0" transform="translate(1279.50,447.30)" font-family="Liberation Sans, sans-serif" font-size="9.6" fill="#111" text-anchor="middle" textLength="24.44" lengthAdjust="spacingAndGlyphs" >5500</text>
<text transform="translate(103.5,346.4)" font-family="Liberation Sans, sans-serif" font-size="10" fill="#111">e<tspan dy="-4" font-size="7">−17</tspan><tspan dy="4">x2</tspan><tspan font-style="italic">Å</tspan></text>
<text xml:space="preserve" x="0" y="0" transform="translate(126.20,348.00) rotate(90)" font-family="Liberation Sans, sans-serif" font-size="9.4" fill="#9467bd" text-anchor="end" textLength="25.08" lengthAdjust="spacingAndGlyphs" >Lyα {</text>
<text xml:space="preserve" x="0" y="0" transform="translate(169.90,348.00) rotate(90)" font-family="Liberation Sans, sans-serif" font-size="9.4" fill="#8a2be2" text-anchor="end" textLength="22.41" lengthAdjust="spacingAndGlyphs" >NV {</text>
<text xml:space="preserve" x="0" y="0" transform="translate(198.10,348.00) rotate(90)" font-family="Liberation Sans, sans-serif" font-size="9.4" fill="#800080" text-anchor="end" textLength="24.70" lengthAdjust="spacingAndGlyphs" >CIV {</text>
<text xml:space="preserve" x="0" y="0" transform="translate(209.10,348.00) rotate(90)" font-family="Liberation Sans, sans-serif" font-size="9.4" fill="#8a2be2" text-anchor="end" textLength="23.05" lengthAdjust="spacingAndGlyphs" >SiII {</text>
<text xml:space="preserve" x="0" y="0" transform="translate(248.30,348.00) rotate(90)" font-family="Liberation Sans, sans-serif" font-size="9.4" fill="#ff00ff" text-anchor="end" textLength="21.05" lengthAdjust="spacingAndGlyphs" >CII {</text>
<text xml:space="preserve" x="0" y="0" transform="translate(304.20,348.00) rotate(90)" font-family="Liberation Sans, sans-serif" font-size="9.4" fill="#ff0000" text-anchor="end" textLength="25.36" lengthAdjust="spacingAndGlyphs" >OVI {</text>
<text xml:space="preserve" x="0" y="0" transform="translate(325.40,348.00) rotate(90)" font-family="Liberation Sans, sans-serif" font-size="9.4" fill="#800080" text-anchor="end" textLength="27.33" lengthAdjust="spacingAndGlyphs" >HeII {</text>
<text xml:space="preserve" x="0" y="0" transform="translate(439.20,348.00) rotate(90)" font-family="Liberation Sans, sans-serif" font-size="9.4" fill="#8a2be2" text-anchor="end" textLength="26.70" lengthAdjust="spacingAndGlyphs" >SiIV {</text>
<text xml:space="preserve" x="0" y="0" transform="translate(538.50,348.00) rotate(90)" font-family="Liberation Sans, sans-serif" font-size="9.4" fill="#87ceeb" text-anchor="end" textLength="21.88" lengthAdjust="spacingAndGlyphs" >OII {</text>
<text xml:space="preserve" x="0" y="0" transform="translate(551.30,348.00) rotate(90)" font-family="Liberation Sans, sans-serif" font-size="9.4" fill="#ffa500" text-anchor="end" textLength="24.70" lengthAdjust="spacingAndGlyphs" >CIV {</text>
<text xml:space="preserve" x="0" y="0" transform="translate(560.30,348.00) rotate(90)" font-family="Liberation Sans, sans-serif" font-size="9.4" fill="#87ceeb" text-anchor="end" textLength="21.88" lengthAdjust="spacingAndGlyphs" >OII {</text>
<text xml:space="preserve" x="0" y="0" transform="translate(753.10,348.00) rotate(90)" font-family="Liberation Sans, sans-serif" font-size="9.4" fill="#ff0000" text-anchor="end" textLength="22.41" lengthAdjust="spacingAndGlyphs" >NV {</text>
<text xml:space="preserve" x="0" y="0" transform="translate(803.20,348.00) rotate(90)" font-family="Liberation Sans, sans-serif" font-size="9.4" fill="#ff0000" text-anchor="end" textLength="23.05" lengthAdjust="spacingAndGlyphs" >SiII {</text>
<text xml:space="preserve" x="0" y="0" transform="translate(855.40,348.00) rotate(90)" font-family="Liberation Sans, sans-serif" font-size="9.4" fill="#8a2be2" text-anchor="end" textLength="27.33" lengthAdjust="spacingAndGlyphs" >HeII {</text>
<text xml:space="preserve" x="0" y="0" transform="translate(948.30,348.00) rotate(90)" font-family="Liberation Sans, sans-serif" font-size="9.4" fill="#87ceeb" text-anchor="end" textLength="21.58" lengthAdjust="spacingAndGlyphs" >Hγ {</text>
<text xml:space="preserve" x="0" y="0" transform="translate(972.90,348.00) rotate(90)" font-family="Liberation Sans, sans-serif" font-size="9.4" fill="#87ceeb" text-anchor="end" textLength="21.58" lengthAdjust="spacingAndGlyphs" >Hγ {</text>
<text xml:space="preserve" x="0" y="0" transform="translate(1017.90,348.00) rotate(90)" font-family="Liberation Sans, sans-serif" font-size="9.4" fill="#4169e1" text-anchor="end" textLength="22.02" lengthAdjust="spacingAndGlyphs" >Hβ {</text>
<text xml:space="preserve" x="0" y="0" transform="translate(1077.90,348.00) rotate(90)" font-family="Liberation Sans, sans-serif" font-size="9.4" fill="#4169e1" text-anchor="end" textLength="24.64" lengthAdjust="spacingAndGlyphs" >OIII {</text>
<text xml:space="preserve" x="0" y="0" transform="translate(1097.20,348.00) rotate(90)" font-family="Liberation Sans, sans-serif" font-size="9.4" fill="#ff0000" text-anchor="end" textLength="26.70" lengthAdjust="spacingAndGlyphs" >SiIV {</text>
<text xml:space="preserve" x="0" y="0" transform="translate(1107.80,348.00) rotate(90)" font-family="Liberation Sans, sans-serif" font-size="9.4" fill="#4169e1" text-anchor="end" textLength="24.64" lengthAdjust="spacingAndGlyphs" >OIII {</text>
<text xml:space="preserve" x="0" y="0" transform="translate(1135.60,348.00) rotate(90)" font-family="Liberation Sans, sans-serif" font-size="9.4" fill="#008000" text-anchor="end" textLength="21.58" lengthAdjust="spacingAndGlyphs" >Hγ {</text>
<text xml:space="preserve" x="0" y="0" transform="translate(1277.10,348.00) rotate(90)" font-family="Liberation Sans, sans-serif" font-size="9.4" fill="#800080" text-anchor="end" textLength="21.05" lengthAdjust="spacingAndGlyphs" >CII {</text>
<text xml:space="preserve" x="0" y="0" transform="translate(305.90,305.50) rotate(90)" font-family="Liberation Sans, sans-serif" font-size="9.4" fill="#ffa500" text-anchor="end" textLength="26.70" lengthAdjust="spacingAndGlyphs" >SiIV {</text>
<text xml:space="preserve" x="0" y="0" transform="translate(324.20,305.50) rotate(90)" font-family="Liberation Sans, sans-serif" font-size="9.4" fill="#4169e1" text-anchor="end" textLength="21.88" lengthAdjust="spacingAndGlyphs" >OII {</text>
<text xml:space="preserve" x="0" y="0" transform="translate(1133.70,305.50) rotate(90)" font-family="Liberation Sans, sans-serif" font-size="9.4" fill="#ffa500" text-anchor="end" textLength="23.81" lengthAdjust="spacingAndGlyphs" >CIII {</text>
<rect x="454.40" y="450.00" width="17.60" height="6.20" fill="#ff0000" />
<text xml:space="preserve" x="0" y="0" transform="translate(478.00,456.00)" font-family="Liberation Sans, sans-serif" font-size="7.5" fill="#222" text-anchor="start" textLength="12.86" lengthAdjust="spacingAndGlyphs" >Lyα</text>
<rect x="508.00" y="450.00" width="18.00" height="6.20" fill="#008000" />
<text xml:space="preserve" x="0" y="0" transform="translate(532.00,456.00)" font-family="Liberation Sans, sans-serif" font-size="7.5" fill="#222" text-anchor="start" textLength="10.34" lengthAdjust="spacingAndGlyphs" >OII</text>
<rect x="561.00" y="450.00" width="17.00" height="6.20" fill="#8a2be2" />
<text xml:space="preserve" x="0" y="0" transform="translate(584.40,456.00)" font-family="Liberation Sans, sans-serif" font-size="7.5" fill="#222" text-anchor="start" textLength="12.58" lengthAdjust="spacingAndGlyphs" >CIV</text>
<rect x="616.00" y="450.00" width="17.60" height="6.20" fill="#800080" />
<text xml:space="preserve" x="0" y="0" transform="translate(639.60,456.00)" font-family="Liberation Sans, sans-serif" font-size="7.5" fill="#222" text-anchor="start" textLength="11.89" lengthAdjust="spacingAndGlyphs" >CIII</text>
<rect x="668.00" y="450.00" width="17.00" height="6.20" fill="#ff00ff" />
<text xml:space="preserve" x="0" y="0" transform="translate(691.00,456.00)" font-family="Liberation Sans, sans-serif" font-size="7.5" fill="#222" text-anchor="start" textLength="15.67" lengthAdjust="spacingAndGlyphs" >MgII</text>
<rect x="723.60" y="450.00" width="17.40" height="6.20" fill="#4169e1" />
<text xml:space="preserve" x="0" y="0" transform="translate(747.60,456.00)" font-family="Liberation Sans, sans-serif" font-size="7.5" fill="#222" text-anchor="start" textLength="10.08" lengthAdjust="spacingAndGlyphs" >Hγ</text>
<rect x="774.00" y="450.00" width="17.60" height="6.20" fill="#ffa500" />
<text xml:space="preserve" x="0" y="0" transform="translate(797.60,456.00)" font-family="Liberation Sans, sans-serif" font-size="7.5" fill="#222" text-anchor="start" textLength="14.69" lengthAdjust="spacingAndGlyphs" >HeII</text>
<rect x="829.00" y="450.00" width="17.00" height="6.20" fill="#87ceeb" />
<text xml:space="preserve" x="0" y="0" transform="translate(852.40,456.00)" font-family="Liberation Sans, sans-serif" font-size="7.5" fill="#222" text-anchor="start" textLength="25.03" lengthAdjust="spacingAndGlyphs" >(K)CaII</text>
<rect x="895.00" y="450.00" width="16.60" height="6.20" fill="#87ceeb" />
<text xml:space="preserve" x="0" y="0" transform="translate(918.00,456.00)" font-family="Liberation Sans, sans-serif" font-size="7.5" fill="#222" text-anchor="start" textLength="25.75" lengthAdjust="spacingAndGlyphs" >(H)CaII</text>
<text xml:space="preserve" x="0" y="0" transform="translate(70.30,498.90) scale(1,1.07)" font-family="Liberation Mono, monospace" font-size="13" fill="#000" >HSC-DEX : Possible Matches = 1 (within +/- 3&quot;)  P(LAE)/P(OII):</text>
<text xml:space="preserve" x="0" y="0" transform="translate(560.50,498.90)" font-family="Liberation Sans, sans-serif" font-size="13" fill="#000" text-anchor="start" textLength="37.19" lengthAdjust="spacingAndGlyphs" >0.048</text>
<text xml:space="preserve" x="0" y="0" transform="translate(602.50,493.20)" font-family="Liberation Sans, sans-serif" font-size="8.6" fill="#000" text-anchor="start" textLength="24.61" lengthAdjust="spacingAndGlyphs" >0.081</text>
<text xml:space="preserve" x="0" y="0" transform="translate(602.50,501.80)" font-family="Liberation Sans, sans-serif" font-size="8.6" fill="#000" text-anchor="start" textLength="24.61" lengthAdjust="spacingAndGlyphs" >0.031</text>
<text xml:space="preserve" x="0" y="0" transform="translate(637.00,498.90) scale(1,1.07)" font-family="Liberation Mono, monospace" font-size="13" fill="#000" >(r)</text>
<text xml:space="preserve" x="0" y="0" transform="translate(143.90,525.60)" font-family="Liberation Sans, sans-serif" font-size="12.7" fill="#111" text-anchor="middle" textLength="91.05" lengthAdjust="spacingAndGlyphs" >Fiber Positions</text>
<line x1="78.30" y1="680.30" x2="78.30" y2="683.80" stroke="#333" stroke-width="1" />
<text xml:space="preserve" x="0" y="0" transform="translate(78.30,696.00)" font-family="Liberation Sans, sans-serif" font-size="10.6" fill="#111" text-anchor="middle" >−4</text>
<line x1="66.60" y1="672.40" x2="70.10" y2="672.40" stroke="#333" stroke-width="1" />
<text xml:space="preserve" x="0" y="0" transform="translate(64.60,676.20)" font-family="Liberation Sans, sans-serif" font-size="10.6" fill="#111" text-anchor="end" >−4</text>
<line x1="111.10" y1="680.30" x2="111.10" y2="683.80" stroke="#333" stroke-width="1" />
<text xml:space="preserve" x="0" y="0" transform="translate(111.10,696.00)" font-family="Liberation Sans, sans-serif" font-size="10.6" fill="#111" text-anchor="middle" >−2</text>
<line x1="66.60" y1="639.60" x2="70.10" y2="639.60" stroke="#333" stroke-width="1" />
<text xml:space="preserve" x="0" y="0" transform="translate(64.60,643.40)" font-family="Liberation Sans, sans-serif" font-size="10.6" fill="#111" text-anchor="end" >−2</text>
<line x1="143.90" y1="680.30" x2="143.90" y2="683.80" stroke="#333" stroke-width="1" />
<text xml:space="preserve" x="0" y="0" transform="translate(143.90,696.00)" font-family="Liberation Sans, sans-serif" font-size="10.6" fill="#111" text-anchor="middle" >0</text>
<line x1="66.60" y1="606.80" x2="70.10" y2="606.80" stroke="#333" stroke-width="1" />
<text xml:space="preserve" x="0" y="0" transform="translate(64.60,610.60)" font-family="Liberation Sans, sans-serif" font-size="10.6" fill="#111" text-anchor="end" >0</text>
<line x1="176.70" y1="680.30" x2="176.70" y2="683.80" stroke="#333" stroke-width="1" />
<text xml:space="preserve" x="0" y="0" transform="translate(176.70,696.00)" font-family="Liberation Sans, sans-serif" font-size="10.6" fill="#111" text-anchor="middle" >2</text>
<line x1="66.60" y1="574.00" x2="70.10" y2="574.00" stroke="#333" stroke-width="1" />
<text xml:space="preserve" x="0" y="0" transform="translate(64.60,577.80)" font-family="Liberation Sans, sans-serif" font-size="10.6" fill="#111" text-anchor="end" >2</text>
<line x1="209.50" y1="680.30" x2="209.50" y2="683.80" stroke="#333" stroke-width="1" />
<text xml:space="preserve" x="0" y="0" transform="translate(209.50,696.00)" font-family="Liberation Sans, sans-serif" font-size="10.6" fill="#111" text-anchor="middle" >4</text>
<line x1="66.60" y1="541.20" x2="70.10" y2="541.20" stroke="#333" stroke-width="1" />
<text xml:space="preserve" x="0" y="0" transform="translate(64.60,545.00)" font-family="Liberation Sans, sans-serif" font-size="10.6" fill="#111" text-anchor="end" >4</text>
<text xml:space="preserve" x="0" y="0" transform="translate(143.90,706.80)" font-family="Liberation Sans, sans-serif" font-size="10.6" fill="#111" text-anchor="middle" textLength="39.81" lengthAdjust="spacingAndGlyphs" >arcsecs</text>
<rect x="70.10" y="532.80" width="148.00" height="147.50" fill="#888" filter="url(#nz18)" opacity="1.0" />
<g clip-path="url(#gc41)">
<circle cx="142.0" cy="599.6" r="40.0" fill="url(#rg41)"/>
<ellipse cx="212.8" cy="629.8" rx="17" ry="18" fill="url(#rg41b)"/>
</g>
<rect x="94.70" y="557.60" width="98.40" height="98.40" fill="none" stroke="#e00000" stroke-width="1.3" />
<g clip-path="url(#gc41)">
<circle cx="116.0" cy="562.4" r="12.2" fill="none" stroke="#5a5a5a" stroke-width="1.1"/>
<circle cx="139.1" cy="557.6" r="12.2" fill="none" stroke="#5a5a5a" stroke-width="1.1"/>
<circle cx="163.4" cy="553.3" r="12.2" fill="none" stroke="#5a5a5a" stroke-width="1.1"/>
<circle cx="108.1" cy="585.5" r="12.2" fill="none" stroke="#5a5a5a" stroke-width="1.1"/>
<circle cx="132.3" cy="580.6" r="12.2" fill="none" stroke="#5a5a5a" stroke-width="1.1"/>
<circle cx="155.4" cy="575.5" r="12.2" fill="none" stroke="#5a5a5a" stroke-width="1.1"/>
<circle cx="178.8" cy="570.7" r="12.2" fill="none" stroke="#5a5a5a" stroke-width="1.1"/>
<circle cx="196.4" cy="588.9" r="12.2" fill="none" stroke="#5a5a5a" stroke-width="1.1"/>
<circle cx="100.9" cy="608.9" r="12.2" fill="none" stroke="#5a5a5a" stroke-width="1.1"/>
<circle cx="125.0" cy="603.0" r="12.2" fill="none" stroke="#5a5a5a" stroke-width="1.1"/>
<circle cx="147.3" cy="596.8" r="12.2" fill="none" stroke="#5a5a5a" stroke-width="1.1"/>
<circle cx="171.8" cy="593.2" r="12.2" fill="none" stroke="#5a5a5a" stroke-width="1.1"/>
<circle cx="186.9" cy="612.0" r="12.2" fill="none" stroke="#5a5a5a" stroke-width="1.1"/>
<circle cx="164.4" cy="616.3" r="12.2" fill="none" stroke="#5a5a5a" stroke-width="1.1"/>
<circle cx="140.8" cy="621.6" r="12.2" fill="none" stroke="#5a5a5a" stroke-width="1.1"/>
<circle cx="116.7" cy="626.2" r="12.2" fill="none" stroke="#5a5a5a" stroke-width="1.1"/>
<circle cx="93.6" cy="629.9" r="12.2" fill="none" stroke="#5a5a5a" stroke-width="1.1"/>
<circle cx="180.1" cy="635.2" r="12.2" fill="none" stroke="#5a5a5a" stroke-width="1.1"/>
<circle cx="155.4" cy="639.4" r="12.2" fill="none" stroke="#5a5a5a" stroke-width="1.1"/>
<circle cx="132.3" cy="643.5" r="12.2" fill="none" stroke="#5a5a5a" stroke-width="1.1"/>
<circle cx="109.3" cy="649.9" r="12.2" fill="none" stroke="#5a5a5a" stroke-width="1.1"/>
<circle cx="148.5" cy="663.1" r="12.2" fill="none" stroke="#5a5a5a" stroke-width="1.1"/>
</g>
<circle cx="125.0" cy="603.0" r="12.2" fill="none" stroke="#ffa500" stroke-width="1.6"/>
<circle cx="147.3" cy="596.8" r="12.2" fill="none" stroke="#0000ff" stroke-width="1.6"/>
<circle cx="164.4" cy="616.3" r="12.2" fill="none" stroke="#ff0000" stroke-width="1.6"/>
<circle cx="140.8" cy="621.6" r="12.2" fill="none" stroke="#00ff00" stroke-width="1.6"/>
<line x1="139.90" y1="606.80" x2="147.90" y2="606.80" stroke="#f00" stroke-width="1.3" />
<line x1="143.90" y1="602.80" x2="143.90" y2="610.80" stroke="#f00" stroke-width="1.3" />
<text xml:space="preserve" x="0" y="0" transform="translate(143.90,546.50)" font-family="Liberation Sans, sans-serif" font-size="10.6" fill="#f00" text-anchor="middle" textLength="7.92" lengthAdjust="spacingAndGlyphs" >N</text>
<text xml:space="preserve" x="0" y="0" transform="translate(79.90,610.20)" font-family="Liberation Sans, sans-serif" font-size="10.6" fill="#f00" text-anchor="middle" textLength="6.69" lengthAdjust="spacingAndGlyphs" >E</text>
<rect x="70.10" y="532.80" width="148.00" height="147.50" fill="none" stroke="#222" stroke-width="1.2" />
<text xml:space="preserve" x="0" y="0" transform="translate(328.90,525.60)" font-family="Liberation Sans, sans-serif" font-size="12.7" fill="#111" text-anchor="middle" textLength="80.81" lengthAdjust="spacingAndGlyphs" >Lineflux Map</text>
<line x1="263.30" y1="680.30" x2="263.30" y2="683.80" stroke="#333" stroke-width="1" />
<text xml:space="preserve" x="0" y="0" transform="translate(263.30,696.00)" font-family="Liberation Sans, sans-serif" font-size="10.6" fill="#111" text-anchor="middle" >−4</text>
<line x1="251.90" y1="672.40" x2="255.40" y2="672.40" stroke="#333" stroke-width="1" />
<text xml:space="preserve" x="0" y="0" transform="translate(249.90,676.20)" font-family="Liberation Sans, sans-serif" font-size="10.6" fill="#111" text-anchor="end" >−4</text>
<line x1="296.10" y1="680.30" x2="296.10" y2="683.80" stroke="#333" stroke-width="1" />
<text xml:space="preserve" x="0" y="0" transform="translate(296.10,696.00)" font-family="Liberation Sans, sans-serif" font-size="10.6" fill="#111" text-anchor="middle" >−2</text>
<line x1="251.90" y1="639.60" x2="255.40" y2="639.60" stroke="#333" stroke-width="1" />
<text xml:space="preserve" x="0" y="0" transform="translate(249.90,643.40)" font-family="Liberation Sans, sans-serif" font-size="10.6" fill="#111" text-anchor="end" >−2</text>
<line x1="328.90" y1="680.30" x2="328.90" y2="683.80" stroke="#333" stroke-width="1" />
<text xml:space="preserve" x="0" y="0" transform="translate(328.90,696.00)" font-family="Liberation Sans, sans-serif" font-size="10.6" fill="#111" text-anchor="middle" >0</text>
<line x1="251.90" y1="606.80" x2="255.40" y2="606.80" stroke="#333" stroke-width="1" />
<text xml:space="preserve" x="0" y="0" transform="translate(249.90,610.60)" font-family="Liberation Sans, sans-serif" font-size="10.6" fill="#111" text-anchor="end" >0</text>
<line x1="361.70" y1="680.30" x2="361.70" y2="683.80" stroke="#333" stroke-width="1" />
<text xml:space="preserve" x="0" y="0" transform="translate(361.70,696.00)" font-family="Liberation Sans, sans-serif" font-size="10.6" fill="#111" text-anchor="middle" >2</text>
<line x1="251.90" y1="574.00" x2="255.40" y2="574.00" stroke="#333" stroke-width="1" />
<text xml:space="preserve" x="0" y="0" transform="translate(249.90,577.80)" font-family="Liberation Sans, sans-serif" font-size="10.6" fill="#111" text-anchor="end" >2</text>
<line x1="394.50" y1="680.30" x2="394.50" y2="683.80" stroke="#333" stroke-width="1" />
<text xml:space="preserve" x="0" y="0" transform="translate(394.50,696.00)" font-family="Liberation Sans, sans-serif" font-size="10.6" fill="#111" text-anchor="middle" >4</text>
<line x1="251.90" y1="541.20" x2="255.40" y2="541.20" stroke="#333" stroke-width="1" />
<text xml:space="preserve" x="0" y="0" transform="translate(249.90,545.00)" font-family="Liberation Sans, sans-serif" font-size="10.6" fill="#111" text-anchor="end" >4</text>
<text xml:space="preserve" x="0" y="0" transform="translate(328.90,706.80)" font-family="Liberation Sans, sans-serif" font-size="10.6" fill="#111" text-anchor="middle" textLength="99.64" lengthAdjust="spacingAndGlyphs" >s/b: 2.83 +/- 0.096</text>
<g clip-path="url(#lfclip)">
<rect x="255.40" y="532.80" width="148.00" height="147.50" fill="#414487" />
<g filter="url(#lfblur)">
<polygon points="251.9,529.9 307.8,529.9 301.6,542.3 286.1,556.3 278.3,584.2 251.9,585.8" fill="#440154" opacity="1"/>
<polygon points="251.9,607.5 278.3,598.2 290.7,620.0 293.8,641.7 273.6,644.8 251.9,641.7" fill="#46085c" opacity="1"/>
<polygon points="306.2,529.9 363.7,529.9 369.9,556.3 379.2,579.6 373.0,602.9 363.7,626.2 348.2,651.0 320.2,657.2 295.4,647.9 283.0,626.2 281.4,595.1 289.2,564.1" fill="#2c728e" opacity="1"/>
<polygon points="362.1,537.7 394.8,537.7 407.2,545.4 407.2,579.6 382.3,578.0 369.9,564.1" fill="#440154" opacity="1"/>
<polygon points="387.0,529.9 407.2,529.9 407.2,542.3" fill="#2c728e" opacity="1"/>
<polygon points="373.0,598.2 391.6,606.0 382.3,626.2 371.5,651.0 366.8,685.2 332.6,685.2 335.7,660.3 354.4,641.7 366.8,620.0" fill="#440154" opacity="1"/>
<polygon points="391.6,579.6 407.2,579.6 407.2,685.2 369.9,685.2 379.2,644.8 390.1,613.7" fill="#3e4c8a" opacity="1"/>
<polygon points="251.9,641.7 275.2,638.6 293.8,644.8 301.6,685.2 251.9,685.2" fill="#2c728e" opacity="1"/>
<polygon points="251.9,657.2 269.0,651.0 279.8,685.2 251.9,685.2" fill="#35b779" opacity="1"/>
<polygon points="251.9,669.6 262.8,665.0 267.4,685.2 251.9,685.2" fill="#6ece58" opacity="1"/>
<polygon points="289.6,583.9 347.2,560.6 375.7,631.2 318.1,654.4" fill="#2a788e" opacity="1"/>
<polygon points="297.0,586.6 344.5,567.4 368.9,627.9 321.4,647.1" fill="#21918c" opacity="1"/>
<polygon points="304.4,589.3 341.8,574.2 362.2,624.5 324.7,639.7" fill="#2db27d" opacity="1"/>
<polygon points="309.6,590.8 339.8,578.6 357.3,621.8 327.0,634.0" fill="#6ece58" opacity="1"/>
<polygon points="314.6,592.3 337.7,583.0 352.2,619.0 329.2,628.3" fill="#b5de2b" opacity="1"/>
<polygon points="319.8,594.2 335.9,587.7 347.1,615.3 330.9,621.8" fill="#fde725" opacity="1"/>
</g></g>
<rect x="279.70" y="557.60" width="98.40" height="98.40" fill="none" stroke="#e00000" stroke-width="1.3" />
<line x1="292.00" y1="606.80" x2="319.88" y2="606.80" stroke="#e00000" stroke-width="1.3" />
<line x1="337.92" y1="606.80" x2="366.62" y2="606.80" stroke="#e00000" stroke-width="1.3" />
<line x1="328.90" y1="569.90" x2="328.90" y2="597.78" stroke="#e00000" stroke-width="1.3" />
<line x1="328.90" y1="615.82" x2="328.90" y2="644.52" stroke="#e00000" stroke-width="1.3" />
<text xml:space="preserve" x="0" y="0" transform="translate(328.90,546.50)" font-family="Liberation Sans, sans-serif" font-size="10.6" fill="#f00" text-anchor="middle" textLength="7.92" lengthAdjust="spacingAndGlyphs" >N</text>
<text xml:space="preserve" x="0" y="0" transform="translate(264.90,610.20)" font-family="Liberation Sans, sans-serif" font-size="10.6" fill="#f00" text-anchor="middle" textLength="6.69" lengthAdjust="spacingAndGlyphs" >E</text>
<rect x="255.40" y="532.80" width="148.00" height="147.50" fill="none" stroke="#222" stroke-width="1.2" />
<text xml:space="preserve" x="0" y="0" transform="translate(514.30,525.60)" font-family="Liberation Sans, sans-serif" font-size="12.7" fill="#111" text-anchor="middle" textLength="73.88" lengthAdjust="spacingAndGlyphs" >HSC(26.2) r</text>
<line x1="448.70" y1="680.30" x2="448.70" y2="683.80" stroke="#333" stroke-width="1" />
<text xml:space="preserve" x="0" y="0" transform="translate(448.70,696.00)" font-family="Liberation Sans, sans-serif" font-size="10.6" fill="#111" text-anchor="middle" >−4</text>
<line x1="436.90" y1="672.40" x2="440.40" y2="672.40" stroke="#333" stroke-width="1" />
<text xml:space="preserve" x="0" y="0" transform="translate(434.90,676.20)" font-family="Liberation Sans, sans-serif" font-size="10.6" fill="#111" text-anchor="end" >−4</text>
<line x1="481.50" y1="680.30" x2="481.50" y2="683.80" stroke="#333" stroke-width="1" />
<text xml:space="preserve" x="0" y="0" transform="translate(481.50,696.00)" font-family="Liberation Sans, sans-serif" font-size="10.6" fill="#111" text-anchor="middle" >−2</text>
<line x1="436.90" y1="639.60" x2="440.40" y2="639.60" stroke="#333" stroke-width="1" />
<text xml:space="preserve" x="0" y="0" transform="translate(434.90,643.40)" font-family="Liberation Sans, sans-serif" font-size="10.6" fill="#111" text-anchor="end" >−2</text>
<line x1="514.30" y1="680.30" x2="514.30" y2="683.80" stroke="#333" stroke-width="1" />
<text xml:space="preserve" x="0" y="0" transform="translate(514.30,696.00)" font-family="Liberation Sans, sans-serif" font-size="10.6" fill="#111" text-anchor="middle" >0</text>
<line x1="436.90" y1="606.80" x2="440.40" y2="606.80" stroke="#333" stroke-width="1" />
<text xml:space="preserve" x="0" y="0" transform="translate(434.90,610.60)" font-family="Liberation Sans, sans-serif" font-size="10.6" fill="#111" text-anchor="end" >0</text>
<line x1="547.10" y1="680.30" x2="547.10" y2="683.80" stroke="#333" stroke-width="1" />
<text xml:space="preserve" x="0" y="0" transform="translate(547.10,696.00)" font-family="Liberation Sans, sans-serif" font-size="10.6" fill="#111" text-anchor="middle" >2</text>
<line x1="436.90" y1="574.00" x2="440.40" y2="574.00" stroke="#333" stroke-width="1" />
<text xml:space="preserve" x="0" y="0" transform="translate(434.90,577.80)" font-family="Liberation Sans, sans-serif" font-size="10.6" fill="#111" text-anchor="end" >2</text>
<line x1="579.90" y1="680.30" x2="579.90" y2="683.80" stroke="#333" stroke-width="1" />
<text xml:space="preserve" x="0" y="0" transform="translate(579.90,696.00)" font-family="Liberation Sans, sans-serif" font-size="10.6" fill="#111" text-anchor="middle" >4</text>
<line x1="436.90" y1="541.20" x2="440.40" y2="541.20" stroke="#333" stroke-width="1" />
<text xml:space="preserve" x="0" y="0" transform="translate(434.90,545.00)" font-family="Liberation Sans, sans-serif" font-size="10.6" fill="#111" text-anchor="end" >4</text>
<text xml:space="preserve" x="0" y="0" transform="translate(514.30,706.80)" font-family="Liberation Sans, sans-serif" font-size="10.6" fill="#111" text-anchor="middle" textLength="117.67" lengthAdjust="spacingAndGlyphs" >m:20.3  re:1.9&quot;  s:0.4&quot;</text>
<text xml:space="preserve" x="0" y="0" transform="translate(514.30,718.90)" font-family="Liberation Sans, sans-serif" font-size="10.6" fill="#111" text-anchor="middle" textLength="105.02" lengthAdjust="spacingAndGlyphs" >EWr: 1, PLAE: 0.048</text>
<rect x="440.40" y="532.80" width="148.00" height="147.50" fill="#888" filter="url(#nz19)" opacity="1.0" />
<g clip-path="url(#gc43)">
<circle cx="511.8" cy="600.4" r="36.8" fill="url(#rg43)"/>
<ellipse cx="583.2" cy="629.8" rx="17" ry="18" fill="url(#rg43b)"/>
</g>
<rect x="465.10" y="557.60" width="98.40" height="98.40" fill="none" stroke="#e00000" stroke-width="1.3" />
<circle cx="513.5" cy="600.2" r="32" fill="none" stroke="#f0c000" stroke-width="1.4"/>
<line x1="477.40" y1="606.80" x2="505.28" y2="606.80" stroke="#e00000" stroke-width="1.3" />
<line x1="523.32" y1="606.80" x2="552.02" y2="606.80" stroke="#e00000" stroke-width="1.3" />
<line x1="514.30" y1="569.90" x2="514.30" y2="597.78" stroke="#e00000" stroke-width="1.3" />
<line x1="514.30" y1="615.82" x2="514.30" y2="644.52" stroke="#e00000" stroke-width="1.3" />
<rect x="505.28" y="593.68" width="13.12" height="13.12" fill="none" stroke="#0000ff" stroke-width="1.3" />
<text xml:space="preserve" x="0" y="0" transform="translate(514.30,546.50)" font-family="Liberation Sans, sans-serif" font-size="10.6" fill="#f00" text-anchor="middle" textLength="7.92" lengthAdjust="spacingAndGlyphs" >N</text>
<text xml:space="preserve" x="0" y="0" transform="translate(450.40,610.20)" font-family="Liberation Sans, sans-serif" font-size="10.6" fill="#f00" text-anchor="middle" textLength="6.69" lengthAdjust="spacingAndGlyphs" >E</text>
<rect x="440.40" y="532.80" width="148.00" height="147.50" fill="none" stroke="#222" stroke-width="1.2" />
<text xml:space="preserve" x="0" y="0" transform="translate(70.60,785.50) scale(1,1.07)" font-family="Liberation Mono, monospace" font-size="13" fill="#000" >Separation</text>
<text xml:space="preserve" x="0" y="0" transform="translate(70.60,800.20) scale(1,1.07)" font-family="Liberation Mono, monospace" font-size="13" fill="#000" >Match score</text>
<text xml:space="preserve" x="0" y="0" transform="translate(70.60,814.90) scale(1,1.07)" font-family="Liberation Mono, monospace" font-size="13" fill="#000" >RA, Dec</text>
<text xml:space="preserve" x="0" y="0" transform="translate(70.60,829.60) scale(1,1.07)" font-family="Liberation Mono, monospace" font-size="13" fill="#000" >Spec z</text>
<text xml:space="preserve" x="0" y="0" transform="translate(70.60,844.30) scale(1,1.07)" font-family="Liberation Mono, monospace" font-size="13" fill="#000" >Photo z</text>
<text xml:space="preserve" x="0" y="0" transform="translate(70.60,859.00) scale(1,1.07)" font-family="Liberation Mono, monospace" font-size="13" fill="#000" >Est LyA rest-EW</text>
<text xml:space="preserve" x="0" y="0" transform="translate(70.60,873.70) scale(1,1.07)" font-family="Liberation Mono, monospace" font-size="13" fill="#000" >mag</text>
<text xml:space="preserve" x="0" y="0" transform="translate(70.60,888.40) scale(1,1.07)" font-family="Liberation Mono, monospace" font-size="13" fill="#000" >P(LAE)/P(OII)</text>
<text xml:space="preserve" x="0" y="0" transform="translate(287.40,778.80) scale(1,1.07)" font-family="Liberation Mono, monospace" font-size="13" fill="#0000ff" >0.474602&quot;</text>
<text xml:space="preserve" x="0" y="0" transform="translate(287.40,793.60) scale(1,1.07)" font-family="Liberation Mono, monospace" font-size="13" fill="#0000ff" >1.000</text>
<text xml:space="preserve" x="0" y="0" transform="translate(287.40,808.20) scale(1,1.07)" font-family="Liberation Mono, monospace" font-size="13" fill="#0000ff" >165.333149, 51.006210</text>
<text xml:space="preserve" x="0" y="0" transform="translate(287.40,822.60) scale(1,1.07)" font-family="Liberation Mono, monospace" font-size="13" fill="#0000ff" >N/A</text>
<text xml:space="preserve" x="0" y="0" transform="translate(287.40,837.60) scale(1,1.07)" font-family="Liberation Mono, monospace" font-size="13" fill="#0000ff" >N/A</text>
<text xml:space="preserve" x="0" y="0" transform="translate(287.40,854.20) scale(1,1.07)" font-family="Liberation Mono, monospace" font-size="13" fill="#0000ff" >1.90(±0.56)Å</text>
<text xml:space="preserve" x="0" y="0" transform="translate(287.40,869.80) scale(1,1.07)" font-family="Liberation Mono, monospace" font-size="13" fill="#0000ff" >20.39(20.38,20.39)R</text>
<text xml:space="preserve" x="0" y="0" transform="translate(286.50,885.80)" font-family="Liberation Sans, sans-serif" font-size="13" fill="#0000ff" text-anchor="start" textLength="37.19" lengthAdjust="spacingAndGlyphs" >0.051</text>
<text xml:space="preserve" x="0" y="0" transform="translate(328.30,881.10)" font-family="Liberation Sans, sans-serif" font-size="8.6" fill="#0000ff" text-anchor="start" textLength="24.61" lengthAdjust="spacingAndGlyphs" >0.076</text>
<text xml:space="preserve" x="0" y="0" transform="translate(328.30,889.20)" font-family="Liberation Sans, sans-serif" font-size="8.6" fill="#0000ff" text-anchor="start" textLength="19.14" lengthAdjust="spacingAndGlyphs" >0.03</text>
<text xml:space="preserve" x="0" y="0" transform="translate(939.00,821.30) scale(1,1.07)" font-family="Liberation Mono, monospace" font-size="13" fill="#000" >Phot z plot not available.</text></svg></body></html>
